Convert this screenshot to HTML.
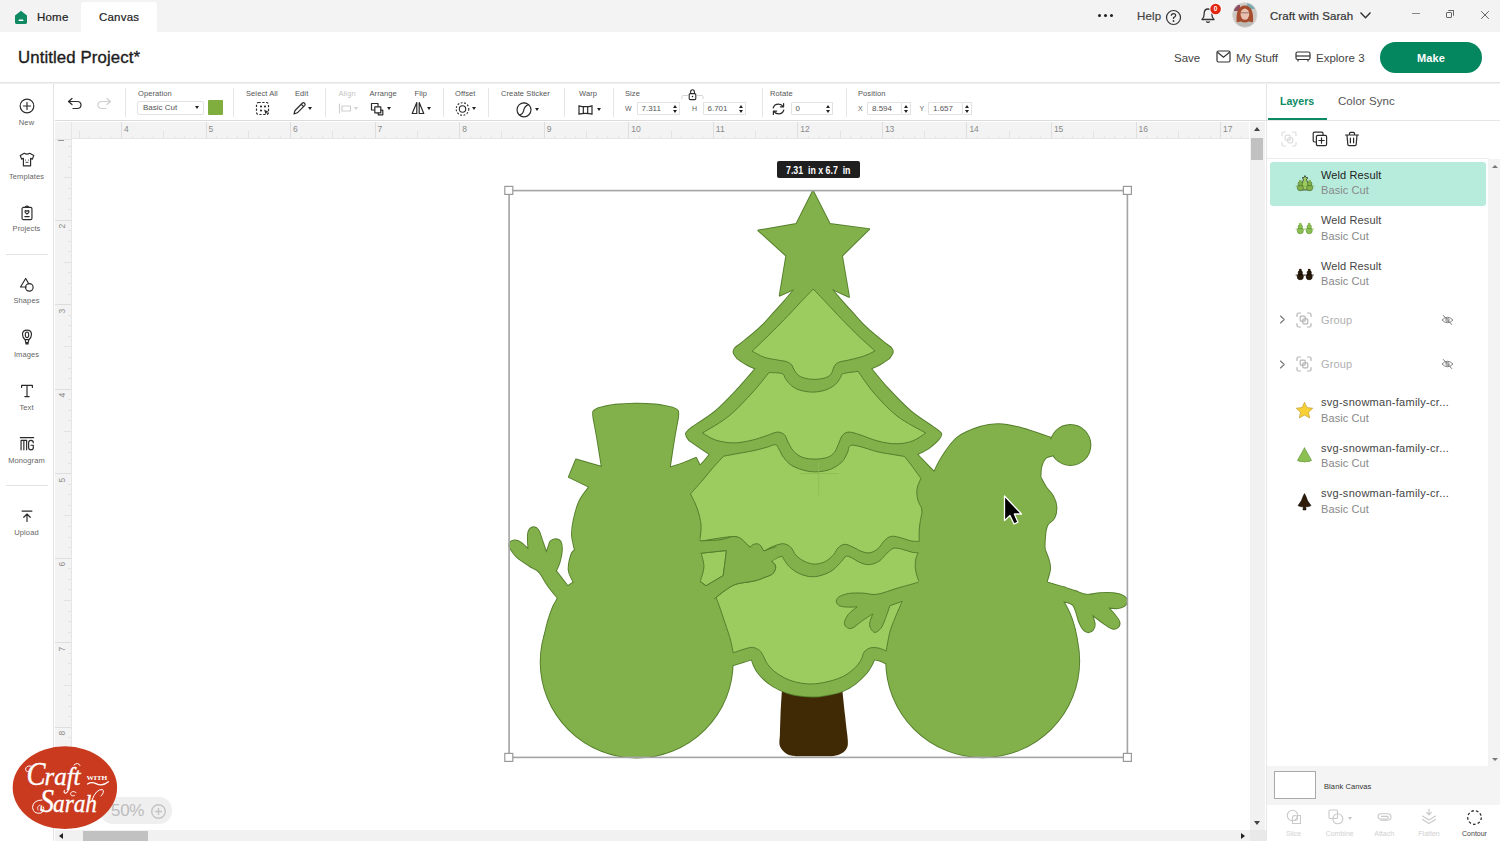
<!DOCTYPE html>
<html>
<head>
<meta charset="utf-8">
<title>Canvas</title>
<style>
*{box-sizing:border-box;margin:0;padding:0}
html,body{width:1500px;height:841px;overflow:hidden;background:#fff;font-family:"Liberation Sans",sans-serif;color:#333}
.abs{position:absolute}
#titlebar{position:absolute;left:0;top:0;width:1500px;height:32px;background:#f3f3f3}
#tab-canvas{position:absolute;left:81px;top:2px;width:76px;height:30px;background:#fff;border-radius:3px 3px 0 0}
.tb-txt{position:absolute;font-size:11.5px;color:#222;white-space:nowrap;letter-spacing:.2px;-webkit-text-stroke:.2px currentColor}
#header{position:absolute;left:0;top:32px;width:1500px;height:51px;background:#fff;border-bottom:1px solid #e4e4e4}
#header:after{content:"";position:absolute;left:0;right:0;bottom:-3px;height:2px;background:#f1f1f1}
#projtitle{position:absolute;left:18px;top:15.5px;font-size:16.8px;color:#1c1c1c;-webkit-text-stroke:.35px #1c1c1c;letter-spacing:.1px;white-space:nowrap}
.hd-txt{position:absolute;font-size:11.5px;color:#444;white-space:nowrap}
#make{position:absolute;left:1380px;top:10px;width:102px;height:31px;border-radius:16px;background:#04865f;color:#fff;font-weight:bold;font-size:11px;text-align:center;line-height:33.5px;letter-spacing:.1px}
#sidebar{position:absolute;left:0;top:84px;width:54px;height:757px;background:#fff;border-right:1px solid #e3e3e3}
.sb-lbl{position:absolute;left:0;width:53px;text-align:center;font-size:7.5px;color:#666;letter-spacing:.1px}
.sb-sep{position:absolute;left:6px;width:42px;height:1px;background:#e2e2e2}
#toolbar{position:absolute;left:55px;top:84px;width:1211px;height:37px;background:#fff;border-bottom:1px solid #dcdcdc}
.tl{position:absolute;top:5px;font-size:7.5px;color:#555;white-space:nowrap;letter-spacing:.1px}
.tl.dis{color:#c4c4c4}
.tsep{position:absolute;top:4px;width:1px;height:29px;background:#e6e6e6}
.inp{position:absolute;top:16px;height:15px;border:1px solid #e2e2e2;background:#fff;font-size:8px;color:#555;line-height:13px;padding-left:4px;border-radius:1px}
.spin{position:absolute;top:16px;width:9px;height:15px;border:1px solid #e2e2e2;border-left:none;background:#fff}
.spin:before{content:"";position:absolute;left:2px;top:2.5px;border:2.5px solid transparent;border-top:none;border-bottom:3.5px solid #222}
.spin:after{content:"";position:absolute;left:2px;top:7.5px;border:2.5px solid transparent;border-bottom:none;border-top:3.5px solid #222}
.pre{position:absolute;top:19px;font-size:7px;color:#666}
.car{position:absolute;width:0;height:0;border:2.5px solid transparent;border-bottom:none;border-top:3.5px solid #222}
#hruler{position:absolute;left:55px;top:122px;width:1194px;height:17px;background:#f3f3f3;border-bottom:1px solid #e6e6e6;overflow:hidden}
#vruler{position:absolute;left:55px;top:122px;width:17px;height:707px;background:#f3f3f3;border-right:1px solid #e6e6e6;overflow:hidden}
.rn{position:absolute;font-size:8.5px;color:#8a8a8a}
#vscroll{position:absolute;left:1250px;top:122px;width:15px;height:708px;background:#f1f1f1}
#hscroll{position:absolute;left:55px;top:830px;width:1195px;height:11px;background:#f1f1f1}
#panel{position:absolute;left:1266px;top:84px;width:234px;height:757px;background:#fff;border-left:1px solid #e6e6e6}
.ln{position:absolute;left:54px;font-size:11px;color:#444;white-space:nowrap;letter-spacing:.12px}
.ls{position:absolute;left:54px;font-size:11px;color:#888;white-space:nowrap;letter-spacing:.1px}
.bl{position:absolute;top:746px;font-size:7px;color:#c9c9c9;text-align:center;width:50px}
</style>
</head>
<body>
<!-- TITLEBAR -->
<div id="titlebar">
  <div id="tab-canvas"></div>
  <svg class="abs" style="left:14px;top:10px" width="14" height="15" viewBox="0 0 14 15"><path d="M7 .8 L13 5.4 V12.6 Q13 14 11.6 14 H2.4 Q1 14 1 12.6 V5.4 Z" fill="#0f8a63"/><rect x="4.6" y="9.6" width="4.8" height="1.5" rx=".6" fill="#fff"/></svg>
  <div class="tb-txt" style="left:37px;top:11px">Home</div>
  <div class="tb-txt" style="left:99px;top:11px">Canvas</div>
  <div class="abs" style="left:1098px;top:14px;width:3px;height:3px;border-radius:50%;background:#222;box-shadow:6px 0 0 #222,12px 0 0 #222"></div>
  <div class="tb-txt" style="left:1137px;top:10px;color:#444">Help</div>
  <svg class="abs" style="left:1165px;top:8.5px" width="17" height="17" viewBox="0 0 17 17"><circle cx="8.5" cy="8.5" r="7" fill="none" stroke="#333" stroke-width="1.2"/><path d="M6.3 6.7 Q6.3 4.6 8.5 4.6 Q10.7 4.6 10.7 6.5 Q10.7 7.8 8.5 8.6 V10" fill="none" stroke="#333" stroke-width="1.2"/><circle cx="8.5" cy="12" r=".9" fill="#333"/></svg>
  <svg class="abs" style="left:1198px;top:3px" width="26" height="24" viewBox="0 0 26 24"><path d="M4 16.5 Q6.2 14.5 6.2 10.5 Q6.2 6 10 6 Q13.8 6 13.8 10.5 Q13.8 14.5 16 16.5 Z" fill="none" stroke="#333" stroke-width="1.3" stroke-linejoin="round"/><path d="M8.3 18.5 Q10 20.2 11.7 18.5" fill="none" stroke="#333" stroke-width="1.3"/><circle cx="17.6" cy="6" r="6.2" fill="#fff"/><circle cx="17.6" cy="6" r="5.3" fill="#e2260f"/><text x="17.6" y="8.4" font-size="6.5" font-weight="bold" fill="#fff" text-anchor="middle" font-family="Liberation Sans">0</text></svg>
  <svg class="abs" style="left:1232px;top:2px" width="26" height="27" viewBox="0 0 26 27"><defs><clipPath id="avc"><circle cx="12.8" cy="13" r="12.4"/></clipPath><filter id="avb"><feGaussianBlur stdDeviation=".55"/></filter></defs><g clip-path="url(#avc)"><g filter="url(#avb)"><rect width="26" height="27" fill="#cdc8c4"/><rect x="15" y="0" width="8" height="7" fill="#7fa9ad"/><rect x="2" y="3" width="6" height="6" fill="#8a5064"/><path d="M4.6 20 Q3.6 4 12.8 3.6 Q22 4 21 20 Q17 22 12.8 22 Q8.6 22 4.6 20 Z" fill="#a54b2d"/><ellipse cx="12.9" cy="12.2" rx="4.3" ry="5.6" fill="#e9c0af"/><path d="M9.2 10.8 H16.6" stroke="#6b4a42" stroke-width=".7"/><path d="M1 27 Q3 19.6 9 19.4 Q12.8 21.6 16.6 19.4 Q23 19.6 25 27 Z" fill="#bdb9b4"/></g><circle cx="12.8" cy="13" r="12.4" fill="none" stroke="#ddd" stroke-width=".8"/></g></svg>
  <div class="tb-txt" style="left:1270px;top:10px;color:#333;letter-spacing:.05px">Craft with Sarah</div>
  <svg class="abs" style="left:1359px;top:11px" width="13" height="9" viewBox="0 0 13 9"><path d="M1.5 1.5 L6.5 6.8 L11.5 1.5" fill="none" stroke="#333" stroke-width="1.4"/></svg>
  <div class="abs" style="left:1412px;top:13px;width:8px;height:1px;background:#888"></div>
  <div class="abs" style="left:1446px;top:12px;width:6px;height:6px;border:1px solid #666;border-radius:1px"></div>
  <div class="abs" style="left:1448px;top:10px;width:6px;height:6px;border-top:1px solid #666;border-right:1px solid #666;border-radius:1px"></div>
  <svg class="abs" style="left:1480px;top:10px" width="10" height="10" viewBox="0 0 10 10"><path d="M1.2 1.2 L8.8 8.8 M8.8 1.2 L1.2 8.8" stroke="#666" stroke-width="1"/></svg>
</div>

<!-- HEADER -->
<div id="header">
  <div id="projtitle">Untitled Project*</div>
  <div class="hd-txt" style="left:1174px;top:20px">Save</div>
  <svg class="abs" style="left:1216px;top:18px" width="15" height="13" viewBox="0 0 15 13"><rect x="1" y="1" width="13" height="11" rx="1.5" fill="none" stroke="#333" stroke-width="1.2"/><path d="M1.5 2.2 L7.5 7.2 L13.5 2.2" fill="none" stroke="#333" stroke-width="1.2"/></svg>
  <div class="hd-txt" style="left:1236px;top:20px">My Stuff</div>
  <svg class="abs" style="left:1295px;top:19px" width="16" height="11" viewBox="0 0 16 11"><rect x="1" y="1" width="14" height="7.5" rx="1.5" fill="none" stroke="#333" stroke-width="1.2"/><path d="M1 5 H15" stroke="#333" stroke-width="1.2"/><path d="M3 8.5 V10.5 M13 8.5 V10.5" stroke="#333" stroke-width="1.2"/></svg>
  <div class="hd-txt" style="left:1316px;top:20px">Explore 3</div>
  <div id="make">Make</div>
</div>

<!-- SIDEBAR -->
<div id="sidebar">
<!--SIDEBAR-ICONS-->
<svg class="abs" style="left:17.5px;top:13.3px" width="18" height="18" viewBox="0 0 20 20"><circle cx="10" cy="10" r="7.6" fill="none" stroke="#2b2b2b" stroke-width="1.3" stroke-linecap="round" stroke-linejoin="round"/><path d="M10 6 V14 M6 10 H14" fill="none" stroke="#2b2b2b" stroke-width="1.3" stroke-linecap="round" stroke-linejoin="round"/></svg>
<div class="sb-lbl" style="top:33.5px">New</div>
<svg class="abs" style="left:17.5px;top:66.7px" width="18" height="18" viewBox="0 0 20 20"><path d="M7 2.5 Q10 4.6 13 2.5 L17.5 5 L16 9 L14 8.2 V16.5 H6 V8.2 L4 9 L2.5 5 Z" fill="none" stroke="#2b2b2b" stroke-width="1.3" stroke-linecap="round" stroke-linejoin="round"/><circle cx="8.4" cy="10" r=".6" fill="#2b2b2b"/><circle cx="11.6" cy="10" r=".6" fill="#2b2b2b"/><path d="M8.4 12.6 H11.6" stroke="#2b2b2b" stroke-width="1"/></svg>
<div class="sb-lbl" style="top:87.5px">Templates</div>
<svg class="abs" style="left:17.5px;top:120.0px" width="18" height="18" viewBox="0 0 20 20"><rect x="4.5" y="3.8" width="11" height="13.5" rx="1.6" fill="none" stroke="#2b2b2b" stroke-width="1.3" stroke-linecap="round" stroke-linejoin="round"/><path d="M8 3.6 Q10 1.2 12 3.6" fill="none" stroke="#2b2b2b" stroke-width="1.3" stroke-linecap="round" stroke-linejoin="round"/><path d="M10 11.2 Q7.6 9.6 7.8 8.2 Q8.2 6.8 10 8 Q11.8 6.8 12.2 8.2 Q12.4 9.6 10 11.2 Z" fill="none" stroke="#2b2b2b" stroke-width="1.3" stroke-linecap="round" stroke-linejoin="round"/><path d="M7.6 14 H12.4" fill="none" stroke="#2b2b2b" stroke-width="1.3" stroke-linecap="round" stroke-linejoin="round"/></svg>
<div class="sb-lbl" style="top:139.8px">Projects</div>
<div class="sb-sep" style="top:170.0px"></div>
<svg class="abs" style="left:17.5px;top:192.2px" width="18" height="18" viewBox="0 0 20 20"><path d="M8.5 2.8 L2.8 12.2 H9.2" fill="none" stroke="#2b2b2b" stroke-width="1.3" stroke-linecap="round" stroke-linejoin="round"/><path d="M8.5 2.8 L12 8.6" fill="none" stroke="#2b2b2b" stroke-width="1.3" stroke-linecap="round" stroke-linejoin="round"/><circle cx="12.6" cy="12.6" r="4.2" fill="none" stroke="#2b2b2b" stroke-width="1.3" stroke-linecap="round" stroke-linejoin="round"/></svg>
<div class="sb-lbl" style="top:212.2px">Shapes</div>
<svg class="abs" style="left:17.5px;top:244.3px" width="18" height="18" viewBox="0 0 20 20"><path d="M10 2.4 Q5 2.4 5 7.2 Q5 10.6 8 13 H12 Q15 10.6 15 7.2 Q15 2.4 10 2.4 Z" fill="none" stroke="#2b2b2b" stroke-width="1.3" stroke-linecap="round" stroke-linejoin="round"/><ellipse cx="10" cy="7.6" rx="1.9" ry="3.2" fill="none" stroke="#2b2b2b" stroke-width="1.3" stroke-linecap="round" stroke-linejoin="round"/><path d="M8 13 L8.6 16.2 H11.4 L12 13 M8.6 17.6 H11.4" fill="none" stroke="#2b2b2b" stroke-width="1.3" stroke-linecap="round" stroke-linejoin="round"/></svg>
<div class="sb-lbl" style="top:265.5px">Images</div>
<svg class="abs" style="left:17.5px;top:297.6px" width="18" height="18" viewBox="0 0 20 20"><path d="M4 6 V3.8 H16 V6 M10 3.8 V16 M7.6 16.2 H12.4" fill="none" stroke="#2b2b2b" stroke-width="1.3" stroke-linecap="round" stroke-linejoin="round"/></svg>
<div class="sb-lbl" style="top:318.8px">Text</div>
<svg class="abs" style="left:17.5px;top:351.0px" width="18" height="18" viewBox="0 0 20 20"><path d="M2.6 3 H17.4 M3.4 16.5 V6 H9.6 V16.5 M6.5 6 V16.5" fill="none" stroke="#2b2b2b" stroke-width="1.3" stroke-linecap="round" stroke-linejoin="round"/><path d="M17 8.5 Q17 6 14.4 6 Q11.8 6 11.8 8.6 V14 Q11.8 16.5 14.4 16.5 Q17 16.5 17 14 V11.4 H14.4" fill="none" stroke="#2b2b2b" stroke-width="1.3" stroke-linecap="round" stroke-linejoin="round"/></svg>
<div class="sb-lbl" style="top:372.2px">Monogram</div>
<div class="sb-sep" style="top:401.0px"></div>
<svg class="abs" style="left:17.5px;top:422.5px" width="18" height="18" viewBox="0 0 20 20"><path d="M4.5 4.5 H15.5 M10 16 V8 M6.4 11.4 L10 7.8 L13.6 11.4" fill="none" stroke="#2b2b2b" stroke-width="1.3" stroke-linecap="round" stroke-linejoin="round"/></svg>
<div class="sb-lbl" style="top:444.0px">Upload</div>
<!--/SIDEBAR-ICONS-->
</div>

<!-- TOOLBAR -->
<div id="toolbar">
<!--TOOLBAR-ITEMS-->
<svg class="abs" style="left:12.0px;top:13.0px" width="16" height="13" viewBox="0 0 16 13"><path d="M5 1.5 L1.5 4.5 L5 7.5 M1.8 4.5 H10 Q14 4.5 14 8 Q14 11.5 10 11.5 H6" fill="none" stroke="#2b2b2b" stroke-width="1.2" stroke-linecap="round" stroke-linejoin="round"/></svg>
<svg class="abs" style="left:41.0px;top:13.0px" width="16" height="13" viewBox="0 0 16 13"><path d="M11 1.5 L14.5 4.5 L11 7.5 M14.2 4.5 H6 Q2 4.5 2 8 Q2 11.5 6 11.5 H10" fill="none" stroke="#cfcfcf" stroke-width="1.2" stroke-linecap="round" stroke-linejoin="round"/></svg>
<div class="tsep" style="left:70.0px"></div>
<div class="tl" style="left:83.0px;top:5.0px">Operation</div>
<div class="inp" style="left:82px;top:17px;width:67px;height:14px;line-height:12px;padding-left:5px;border-radius:2px">Basic Cut</div>
<div class="car" style="left:140.0px;top:22.0px;border-top-color:#222"></div>
<div class="abs" style="left:153px;top:16px;width:15px;height:15px;background:#7fae3f;border-radius:1px"></div>
<div class="tsep" style="left:178.0px"></div>
<div class="tl" style="left:191.0px;top:5.0px">Select All</div>
<svg class="abs" style="left:200.0px;top:17.0px" width="16" height="16" viewBox="0 0 16 16"><rect x="1.5" y="1.5" width="12" height="12" rx="2" fill="none" stroke="#2b2b2b" stroke-width="1.2" stroke-dasharray="2.2 1.6"/><circle cx="6" cy="5.5" r="1.1" fill="#2b2b2b"/><circle cx="10" cy="5.5" r="1.1" fill="#2b2b2b"/><circle cx="6" cy="9.5" r="1.1" fill="#2b2b2b"/><path d="M9 8.5 L14 11 L11.5 11.8 L10.8 14 Z" fill="#2b2b2b"/></svg>
<div class="tl" style="left:240.0px;top:5.0px">Edit</div>
<svg class="abs" style="left:237.0px;top:17.0px" width="15" height="15" viewBox="0 0 15 15"><path d="M2 13 L3 9.5 L10.5 2 Q11.5 1.2 12.6 2.2 Q13.6 3.3 12.8 4.3 L5.3 11.8 Z M9.3 3.3 L11.6 5.6" fill="none" stroke="#2b2b2b" stroke-width="1.2" stroke-linecap="round" stroke-linejoin="round"/></svg>
<div class="car" style="left:253.0px;top:22.5px;border-top-color:#222"></div>
<div class="tsep" style="left:270.0px"></div>
<div class="tl dis" style="left:283.5px;top:5.0px">Align</div>
<svg class="abs" style="left:283.0px;top:19.0px" width="14" height="11" viewBox="0 0 14 11"><path d="M1.5 1 V10" fill="none" stroke="#cfcfcf" stroke-width="1.2" stroke-linecap="round" stroke-linejoin="round"/><rect x="4" y="3" width="8.5" height="5" fill="none" stroke="#cfcfcf" stroke-width="1.2" stroke-linecap="round" stroke-linejoin="round"/></svg>
<div class="car" style="left:298.5px;top:22.5px;border-top-color:#cfcfcf"></div>
<div class="tl" style="left:314.5px;top:5.0px">Arrange</div>
<svg class="abs" style="left:315.0px;top:17.5px" width="14" height="14" viewBox="0 0 14 14"><path d="M8 4.5 V1.5 H1.5 V8 H4.5" fill="none" stroke="#2b2b2b" stroke-width="1.2" stroke-linecap="round" stroke-linejoin="round"/><rect x="4.8" y="4.8" width="6" height="6" fill="none" stroke="#2b2b2b" stroke-width="1.2" stroke-linecap="round" stroke-linejoin="round"/><path d="M8.2 11 V12.8 H12.8 V8.2 H11" fill="none" stroke="#2b2b2b" stroke-width="1.2" stroke-linecap="round" stroke-linejoin="round"/></svg>
<div class="car" style="left:331.5px;top:22.5px;border-top-color:#222"></div>
<div class="tl" style="left:359.5px;top:5.0px">Flip</div>
<svg class="abs" style="left:356.0px;top:17.0px" width="14" height="14" viewBox="0 0 14 14"><path d="M5.8 1.5 L1.2 12.5 H5.8 Z" fill="none" stroke="#2b2b2b" stroke-width="1.2" stroke-linecap="round" stroke-linejoin="round"/><path d="M8.2 1.5 L12.8 12.5 H8.2 Z" fill="none" stroke="#2b2b2b" stroke-width="1.2" stroke-linecap="round" stroke-linejoin="round"/></svg>
<div class="car" style="left:371.5px;top:22.5px;border-top-color:#222"></div>
<div class="tsep" style="left:388.0px"></div>
<div class="tl" style="left:400.0px;top:5.0px">Offset</div>
<svg class="abs" style="left:400.0px;top:17.0px" width="16" height="16" viewBox="0 0 16 16"><circle cx="7.5" cy="8" r="6.3" fill="none" stroke="#2b2b2b" stroke-width="1.1" stroke-dasharray="1.8 1.6"/><circle cx="7.5" cy="8" r="3.2" fill="none" stroke="#2b2b2b" stroke-width="1.1"/></svg>
<div class="car" style="left:417.0px;top:22.5px;border-top-color:#222"></div>
<div class="tsep" style="left:433.0px"></div>
<div class="tl" style="left:446.0px;top:5.0px">Create Sticker</div>
<svg class="abs" style="left:459.5px;top:17.0px" width="18" height="18" viewBox="0 0 18 18"><path d="M9 1.8 A7 7 0 1 0 16 8.8 Q16 5.6 13.6 3.6 Q9.5 5 8.6 9.6 Q7.9 13.2 4.2 14.2" fill="none" stroke="#2b2b2b" stroke-width="1.2" stroke-linecap="round" stroke-linejoin="round"/><path d="M13.6 3.6 Q11.6 1.8 9 1.8" fill="none" stroke="#2b2b2b" stroke-width="1.2" stroke-linecap="round" stroke-linejoin="round"/></svg>
<div class="car" style="left:479.5px;top:24.0px;border-top-color:#222"></div>
<div class="tsep" style="left:509.0px"></div>
<div class="tl" style="left:524.0px;top:5.0px">Warp</div>
<svg class="abs" style="left:522.0px;top:20.0px" width="17" height="12" viewBox="0 0 17 12"><path d="M1.8 1.8 Q8.5 3.6 15.2 1.8 M1.8 10.2 Q8.5 8.4 15.2 10.2 M2 1.8 V10.2 M6.3 2.6 V9.4 M10.7 2.6 V9.4 M15 1.8 V10.2" fill="none" stroke="#2b2b2b" stroke-width="1.2" stroke-linecap="round" stroke-linejoin="round"/></svg>
<div class="car" style="left:541.5px;top:24.0px;border-top-color:#222"></div>
<div class="tsep" style="left:558.0px"></div>
<div class="tl" style="left:570.0px;top:5.0px">Size</div>
<div class="pre" style="left:570.0px;top:20.5px">W</div>
<div class="inp" style="left:581.5px;top:17.5px;width:35.0px;height:13px;line-height:11px">7.311</div>
<div class="spin" style="left:616.0px;top:17.5px;height:13px"></div>
<svg class="abs" style="left:626.0px;top:4.0px" width="23" height="13" viewBox="0 0 23 13"><path d="M1 11 V8.5 Q1 7.5 2 7.5 H7 M22 11 V8.5 Q22 7.5 21 7.5 H16" fill="none" stroke="#d6d6d6" stroke-width="1"/><rect x="8.2" y="5.6" width="6.6" height="6" rx="1" fill="#fff" stroke="#2b2b2b" stroke-width="1.1"/><path d="M9.6 5.6 V4 Q9.6 1.8 11.5 1.8 Q13.4 1.8 13.4 4 V5.6" fill="none" stroke="#2b2b2b" stroke-width="1.1"/><circle cx="11.5" cy="8.6" r=".8" fill="#2b2b2b"/></svg>
<div class="pre" style="left:637.0px;top:20.5px">H</div>
<div class="inp" style="left:647.5px;top:17.5px;width:35.0px;height:13px;line-height:11px">6.701</div>
<div class="spin" style="left:682.0px;top:17.5px;height:13px"></div>
<div class="tsep" style="left:707.0px"></div>
<div class="tl" style="left:715.0px;top:5.0px">Rotate</div>
<svg class="abs" style="left:715.5px;top:17.5px" width="15" height="14" viewBox="0 0 15 14"><path d="M2.2 6 Q3.2 2.2 7.5 2.2 Q10.6 2.2 12.2 4.6 M12.6 1.6 V4.8 H9.4 M12.8 8 Q11.8 11.8 7.5 11.8 Q4.4 11.8 2.8 9.4 M2.4 12.4 V9.2 H5.6" fill="none" stroke="#2b2b2b" stroke-width="1.2" stroke-linecap="round" stroke-linejoin="round"/></svg>
<div class="inp" style="left:735.5px;top:17.5px;width:34.0px;height:13px;line-height:11px">0</div>
<div class="spin" style="left:769.0px;top:17.5px;height:13px"></div>
<div class="tsep" style="left:790.5px"></div>
<div class="tl" style="left:803.0px;top:5.0px">Position</div>
<div class="pre" style="left:803.0px;top:20.5px">X</div>
<div class="inp" style="left:812.0px;top:17.5px;width:35.0px;height:13px;line-height:11px">8.594</div>
<div class="spin" style="left:846.5px;top:17.5px;height:13px"></div>
<div class="pre" style="left:864.5px;top:20.5px">Y</div>
<div class="inp" style="left:873.0px;top:17.5px;width:35.0px;height:13px;line-height:11px">1.657</div>
<div class="spin" style="left:907.5px;top:17.5px;height:13px"></div>
<!--/TOOLBAR-ITEMS-->
</div>

<!-- RULERS / CANVAS -->
<div id="hruler"><!--HRULER--><div class="abs" style="left:23.7px;top:9px;width:1px;height:9px;background:#e2e2e2"></div><div class="abs" style="left:34.3px;top:14px;width:1px;height:4px;background:#e4e4e4"></div><div class="abs" style="left:44.9px;top:14px;width:1px;height:4px;background:#e4e4e4"></div><div class="abs" style="left:55.4px;top:14px;width:1px;height:4px;background:#e4e4e4"></div><div class="abs" style="left:66.0px;top:0;width:1px;height:18px;background:#dedede"></div><div class="abs" style="left:76.6px;top:14px;width:1px;height:4px;background:#e4e4e4"></div><div class="abs" style="left:87.1px;top:14px;width:1px;height:4px;background:#e4e4e4"></div><div class="abs" style="left:97.7px;top:14px;width:1px;height:4px;background:#e4e4e4"></div><div class="abs" style="left:108.3px;top:9px;width:1px;height:9px;background:#e2e2e2"></div><div class="abs" style="left:118.8px;top:14px;width:1px;height:4px;background:#e4e4e4"></div><div class="abs" style="left:129.4px;top:14px;width:1px;height:4px;background:#e4e4e4"></div><div class="abs" style="left:140.0px;top:14px;width:1px;height:4px;background:#e4e4e4"></div><div class="rn" style="left:69.0px;top:2px">4</div><div class="abs" style="left:150.5px;top:0;width:1px;height:18px;background:#dedede"></div><div class="abs" style="left:161.1px;top:14px;width:1px;height:4px;background:#e4e4e4"></div><div class="abs" style="left:171.7px;top:14px;width:1px;height:4px;background:#e4e4e4"></div><div class="abs" style="left:182.2px;top:14px;width:1px;height:4px;background:#e4e4e4"></div><div class="abs" style="left:192.8px;top:9px;width:1px;height:9px;background:#e2e2e2"></div><div class="abs" style="left:203.4px;top:14px;width:1px;height:4px;background:#e4e4e4"></div><div class="abs" style="left:213.9px;top:14px;width:1px;height:4px;background:#e4e4e4"></div><div class="abs" style="left:224.5px;top:14px;width:1px;height:4px;background:#e4e4e4"></div><div class="rn" style="left:153.5px;top:2px">5</div><div class="abs" style="left:235.1px;top:0;width:1px;height:18px;background:#dedede"></div><div class="abs" style="left:245.6px;top:14px;width:1px;height:4px;background:#e4e4e4"></div><div class="abs" style="left:256.2px;top:14px;width:1px;height:4px;background:#e4e4e4"></div><div class="abs" style="left:266.8px;top:14px;width:1px;height:4px;background:#e4e4e4"></div><div class="abs" style="left:277.4px;top:9px;width:1px;height:9px;background:#e2e2e2"></div><div class="abs" style="left:287.9px;top:14px;width:1px;height:4px;background:#e4e4e4"></div><div class="abs" style="left:298.5px;top:14px;width:1px;height:4px;background:#e4e4e4"></div><div class="abs" style="left:309.1px;top:14px;width:1px;height:4px;background:#e4e4e4"></div><div class="rn" style="left:238.1px;top:2px">6</div><div class="abs" style="left:319.6px;top:0;width:1px;height:18px;background:#dedede"></div><div class="abs" style="left:330.2px;top:14px;width:1px;height:4px;background:#e4e4e4"></div><div class="abs" style="left:340.8px;top:14px;width:1px;height:4px;background:#e4e4e4"></div><div class="abs" style="left:351.3px;top:14px;width:1px;height:4px;background:#e4e4e4"></div><div class="abs" style="left:361.9px;top:9px;width:1px;height:9px;background:#e2e2e2"></div><div class="abs" style="left:372.5px;top:14px;width:1px;height:4px;background:#e4e4e4"></div><div class="abs" style="left:383.0px;top:14px;width:1px;height:4px;background:#e4e4e4"></div><div class="abs" style="left:393.6px;top:14px;width:1px;height:4px;background:#e4e4e4"></div><div class="rn" style="left:322.6px;top:2px">7</div><div class="abs" style="left:404.2px;top:0;width:1px;height:18px;background:#dedede"></div><div class="abs" style="left:414.7px;top:14px;width:1px;height:4px;background:#e4e4e4"></div><div class="abs" style="left:425.3px;top:14px;width:1px;height:4px;background:#e4e4e4"></div><div class="abs" style="left:435.9px;top:14px;width:1px;height:4px;background:#e4e4e4"></div><div class="abs" style="left:446.4px;top:9px;width:1px;height:9px;background:#e2e2e2"></div><div class="abs" style="left:457.0px;top:14px;width:1px;height:4px;background:#e4e4e4"></div><div class="abs" style="left:467.6px;top:14px;width:1px;height:4px;background:#e4e4e4"></div><div class="abs" style="left:478.1px;top:14px;width:1px;height:4px;background:#e4e4e4"></div><div class="rn" style="left:407.2px;top:2px">8</div><div class="abs" style="left:488.7px;top:0;width:1px;height:18px;background:#dedede"></div><div class="abs" style="left:499.3px;top:14px;width:1px;height:4px;background:#e4e4e4"></div><div class="abs" style="left:509.8px;top:14px;width:1px;height:4px;background:#e4e4e4"></div><div class="abs" style="left:520.4px;top:14px;width:1px;height:4px;background:#e4e4e4"></div><div class="abs" style="left:531.0px;top:9px;width:1px;height:9px;background:#e2e2e2"></div><div class="abs" style="left:541.5px;top:14px;width:1px;height:4px;background:#e4e4e4"></div><div class="abs" style="left:552.1px;top:14px;width:1px;height:4px;background:#e4e4e4"></div><div class="abs" style="left:562.7px;top:14px;width:1px;height:4px;background:#e4e4e4"></div><div class="rn" style="left:491.7px;top:2px">9</div><div class="abs" style="left:573.2px;top:0;width:1px;height:18px;background:#dedede"></div><div class="abs" style="left:583.8px;top:14px;width:1px;height:4px;background:#e4e4e4"></div><div class="abs" style="left:594.4px;top:14px;width:1px;height:4px;background:#e4e4e4"></div><div class="abs" style="left:604.9px;top:14px;width:1px;height:4px;background:#e4e4e4"></div><div class="abs" style="left:615.5px;top:9px;width:1px;height:9px;background:#e2e2e2"></div><div class="abs" style="left:626.1px;top:14px;width:1px;height:4px;background:#e4e4e4"></div><div class="abs" style="left:636.6px;top:14px;width:1px;height:4px;background:#e4e4e4"></div><div class="abs" style="left:647.2px;top:14px;width:1px;height:4px;background:#e4e4e4"></div><div class="rn" style="left:576.2px;top:2px">10</div><div class="abs" style="left:657.8px;top:0;width:1px;height:18px;background:#dedede"></div><div class="abs" style="left:668.3px;top:14px;width:1px;height:4px;background:#e4e4e4"></div><div class="abs" style="left:678.9px;top:14px;width:1px;height:4px;background:#e4e4e4"></div><div class="abs" style="left:689.5px;top:14px;width:1px;height:4px;background:#e4e4e4"></div><div class="abs" style="left:700.1px;top:9px;width:1px;height:9px;background:#e2e2e2"></div><div class="abs" style="left:710.6px;top:14px;width:1px;height:4px;background:#e4e4e4"></div><div class="abs" style="left:721.2px;top:14px;width:1px;height:4px;background:#e4e4e4"></div><div class="abs" style="left:731.8px;top:14px;width:1px;height:4px;background:#e4e4e4"></div><div class="rn" style="left:660.8px;top:2px">11</div><div class="abs" style="left:742.3px;top:0;width:1px;height:18px;background:#dedede"></div><div class="abs" style="left:752.9px;top:14px;width:1px;height:4px;background:#e4e4e4"></div><div class="abs" style="left:763.5px;top:14px;width:1px;height:4px;background:#e4e4e4"></div><div class="abs" style="left:774.0px;top:14px;width:1px;height:4px;background:#e4e4e4"></div><div class="abs" style="left:784.6px;top:9px;width:1px;height:9px;background:#e2e2e2"></div><div class="abs" style="left:795.2px;top:14px;width:1px;height:4px;background:#e4e4e4"></div><div class="abs" style="left:805.7px;top:14px;width:1px;height:4px;background:#e4e4e4"></div><div class="abs" style="left:816.3px;top:14px;width:1px;height:4px;background:#e4e4e4"></div><div class="rn" style="left:745.3px;top:2px">12</div><div class="abs" style="left:826.9px;top:0;width:1px;height:18px;background:#dedede"></div><div class="abs" style="left:837.4px;top:14px;width:1px;height:4px;background:#e4e4e4"></div><div class="abs" style="left:848.0px;top:14px;width:1px;height:4px;background:#e4e4e4"></div><div class="abs" style="left:858.6px;top:14px;width:1px;height:4px;background:#e4e4e4"></div><div class="abs" style="left:869.1px;top:9px;width:1px;height:9px;background:#e2e2e2"></div><div class="abs" style="left:879.7px;top:14px;width:1px;height:4px;background:#e4e4e4"></div><div class="abs" style="left:890.3px;top:14px;width:1px;height:4px;background:#e4e4e4"></div><div class="abs" style="left:900.8px;top:14px;width:1px;height:4px;background:#e4e4e4"></div><div class="rn" style="left:829.9px;top:2px">13</div><div class="abs" style="left:911.4px;top:0;width:1px;height:18px;background:#dedede"></div><div class="abs" style="left:922.0px;top:14px;width:1px;height:4px;background:#e4e4e4"></div><div class="abs" style="left:932.5px;top:14px;width:1px;height:4px;background:#e4e4e4"></div><div class="abs" style="left:943.1px;top:14px;width:1px;height:4px;background:#e4e4e4"></div><div class="abs" style="left:953.7px;top:9px;width:1px;height:9px;background:#e2e2e2"></div><div class="abs" style="left:964.2px;top:14px;width:1px;height:4px;background:#e4e4e4"></div><div class="abs" style="left:974.8px;top:14px;width:1px;height:4px;background:#e4e4e4"></div><div class="abs" style="left:985.4px;top:14px;width:1px;height:4px;background:#e4e4e4"></div><div class="rn" style="left:914.4px;top:2px">14</div><div class="abs" style="left:995.9px;top:0;width:1px;height:18px;background:#dedede"></div><div class="abs" style="left:1006.5px;top:14px;width:1px;height:4px;background:#e4e4e4"></div><div class="abs" style="left:1017.1px;top:14px;width:1px;height:4px;background:#e4e4e4"></div><div class="abs" style="left:1027.6px;top:14px;width:1px;height:4px;background:#e4e4e4"></div><div class="abs" style="left:1038.2px;top:9px;width:1px;height:9px;background:#e2e2e2"></div><div class="abs" style="left:1048.8px;top:14px;width:1px;height:4px;background:#e4e4e4"></div><div class="abs" style="left:1059.3px;top:14px;width:1px;height:4px;background:#e4e4e4"></div><div class="abs" style="left:1069.9px;top:14px;width:1px;height:4px;background:#e4e4e4"></div><div class="rn" style="left:998.9px;top:2px">15</div><div class="abs" style="left:1080.5px;top:0;width:1px;height:18px;background:#dedede"></div><div class="abs" style="left:1091.0px;top:14px;width:1px;height:4px;background:#e4e4e4"></div><div class="abs" style="left:1101.6px;top:14px;width:1px;height:4px;background:#e4e4e4"></div><div class="abs" style="left:1112.2px;top:14px;width:1px;height:4px;background:#e4e4e4"></div><div class="abs" style="left:1122.8px;top:9px;width:1px;height:9px;background:#e2e2e2"></div><div class="abs" style="left:1133.3px;top:14px;width:1px;height:4px;background:#e4e4e4"></div><div class="abs" style="left:1143.9px;top:14px;width:1px;height:4px;background:#e4e4e4"></div><div class="abs" style="left:1154.5px;top:14px;width:1px;height:4px;background:#e4e4e4"></div><div class="rn" style="left:1083.5px;top:2px">16</div><div class="abs" style="left:1165.0px;top:0;width:1px;height:18px;background:#dedede"></div><div class="abs" style="left:1175.6px;top:14px;width:1px;height:4px;background:#e4e4e4"></div><div class="abs" style="left:1186.2px;top:14px;width:1px;height:4px;background:#e4e4e4"></div><div class="rn" style="left:1168.0px;top:2px">17</div><!--/HRULER--></div>
<div id="vruler"><!--VRULER--><div class="abs" style="top:23.6px;left:13px;height:1px;width:4px;background:#e4e4e4"></div><div class="abs" style="top:34.1px;left:13px;height:1px;width:4px;background:#e4e4e4"></div><div class="abs" style="top:44.7px;left:13px;height:1px;width:4px;background:#e4e4e4"></div><div class="abs" style="top:55.3px;left:9px;height:1px;width:8px;background:#e2e2e2"></div><div class="abs" style="top:65.8px;left:13px;height:1px;width:4px;background:#e4e4e4"></div><div class="abs" style="top:76.4px;left:13px;height:1px;width:4px;background:#e4e4e4"></div><div class="abs" style="top:87.0px;left:13px;height:1px;width:4px;background:#e4e4e4"></div><div class="abs" style="top:97.5px;left:0;height:1px;width:17px;background:#dedede"></div><div class="abs" style="top:108.1px;left:13px;height:1px;width:4px;background:#e4e4e4"></div><div class="abs" style="top:118.7px;left:13px;height:1px;width:4px;background:#e4e4e4"></div><div class="abs" style="top:129.2px;left:13px;height:1px;width:4px;background:#e4e4e4"></div><div class="abs" style="top:139.8px;left:9px;height:1px;width:8px;background:#e2e2e2"></div><div class="abs" style="top:150.4px;left:13px;height:1px;width:4px;background:#e4e4e4"></div><div class="abs" style="top:160.9px;left:13px;height:1px;width:4px;background:#e4e4e4"></div><div class="abs" style="top:171.5px;left:13px;height:1px;width:4px;background:#e4e4e4"></div><div class="rn" style="left:2px;top:99.0px;transform:rotate(-90deg);transform-origin:center;width:10px;height:10px;line-height:10px;text-align:center">2</div><div class="abs" style="top:182.1px;left:0;height:1px;width:17px;background:#dedede"></div><div class="abs" style="top:192.6px;left:13px;height:1px;width:4px;background:#e4e4e4"></div><div class="abs" style="top:203.2px;left:13px;height:1px;width:4px;background:#e4e4e4"></div><div class="abs" style="top:213.8px;left:13px;height:1px;width:4px;background:#e4e4e4"></div><div class="abs" style="top:224.4px;left:9px;height:1px;width:8px;background:#e2e2e2"></div><div class="abs" style="top:234.9px;left:13px;height:1px;width:4px;background:#e4e4e4"></div><div class="abs" style="top:245.5px;left:13px;height:1px;width:4px;background:#e4e4e4"></div><div class="abs" style="top:256.1px;left:13px;height:1px;width:4px;background:#e4e4e4"></div><div class="rn" style="left:2px;top:183.6px;transform:rotate(-90deg);transform-origin:center;width:10px;height:10px;line-height:10px;text-align:center">3</div><div class="abs" style="top:266.6px;left:0;height:1px;width:17px;background:#dedede"></div><div class="abs" style="top:277.2px;left:13px;height:1px;width:4px;background:#e4e4e4"></div><div class="abs" style="top:287.8px;left:13px;height:1px;width:4px;background:#e4e4e4"></div><div class="abs" style="top:298.3px;left:13px;height:1px;width:4px;background:#e4e4e4"></div><div class="abs" style="top:308.9px;left:9px;height:1px;width:8px;background:#e2e2e2"></div><div class="abs" style="top:319.5px;left:13px;height:1px;width:4px;background:#e4e4e4"></div><div class="abs" style="top:330.0px;left:13px;height:1px;width:4px;background:#e4e4e4"></div><div class="abs" style="top:340.6px;left:13px;height:1px;width:4px;background:#e4e4e4"></div><div class="rn" style="left:2px;top:268.1px;transform:rotate(-90deg);transform-origin:center;width:10px;height:10px;line-height:10px;text-align:center">4</div><div class="abs" style="top:351.2px;left:0;height:1px;width:17px;background:#dedede"></div><div class="abs" style="top:361.7px;left:13px;height:1px;width:4px;background:#e4e4e4"></div><div class="abs" style="top:372.3px;left:13px;height:1px;width:4px;background:#e4e4e4"></div><div class="abs" style="top:382.9px;left:13px;height:1px;width:4px;background:#e4e4e4"></div><div class="abs" style="top:393.4px;left:9px;height:1px;width:8px;background:#e2e2e2"></div><div class="abs" style="top:404.0px;left:13px;height:1px;width:4px;background:#e4e4e4"></div><div class="abs" style="top:414.6px;left:13px;height:1px;width:4px;background:#e4e4e4"></div><div class="abs" style="top:425.1px;left:13px;height:1px;width:4px;background:#e4e4e4"></div><div class="rn" style="left:2px;top:352.7px;transform:rotate(-90deg);transform-origin:center;width:10px;height:10px;line-height:10px;text-align:center">5</div><div class="abs" style="top:435.7px;left:0;height:1px;width:17px;background:#dedede"></div><div class="abs" style="top:446.3px;left:13px;height:1px;width:4px;background:#e4e4e4"></div><div class="abs" style="top:456.8px;left:13px;height:1px;width:4px;background:#e4e4e4"></div><div class="abs" style="top:467.4px;left:13px;height:1px;width:4px;background:#e4e4e4"></div><div class="abs" style="top:478.0px;left:9px;height:1px;width:8px;background:#e2e2e2"></div><div class="abs" style="top:488.5px;left:13px;height:1px;width:4px;background:#e4e4e4"></div><div class="abs" style="top:499.1px;left:13px;height:1px;width:4px;background:#e4e4e4"></div><div class="abs" style="top:509.7px;left:13px;height:1px;width:4px;background:#e4e4e4"></div><div class="rn" style="left:2px;top:437.2px;transform:rotate(-90deg);transform-origin:center;width:10px;height:10px;line-height:10px;text-align:center">6</div><div class="abs" style="top:520.2px;left:0;height:1px;width:17px;background:#dedede"></div><div class="abs" style="top:530.8px;left:13px;height:1px;width:4px;background:#e4e4e4"></div><div class="abs" style="top:541.4px;left:13px;height:1px;width:4px;background:#e4e4e4"></div><div class="abs" style="top:551.9px;left:13px;height:1px;width:4px;background:#e4e4e4"></div><div class="abs" style="top:562.5px;left:9px;height:1px;width:8px;background:#e2e2e2"></div><div class="abs" style="top:573.1px;left:13px;height:1px;width:4px;background:#e4e4e4"></div><div class="abs" style="top:583.6px;left:13px;height:1px;width:4px;background:#e4e4e4"></div><div class="abs" style="top:594.2px;left:13px;height:1px;width:4px;background:#e4e4e4"></div><div class="rn" style="left:2px;top:521.7px;transform:rotate(-90deg);transform-origin:center;width:10px;height:10px;line-height:10px;text-align:center">7</div><div class="abs" style="top:604.8px;left:0;height:1px;width:17px;background:#dedede"></div><div class="abs" style="top:615.3px;left:13px;height:1px;width:4px;background:#e4e4e4"></div><div class="abs" style="top:625.9px;left:13px;height:1px;width:4px;background:#e4e4e4"></div><div class="abs" style="top:636.5px;left:13px;height:1px;width:4px;background:#e4e4e4"></div><div class="abs" style="top:647.1px;left:9px;height:1px;width:8px;background:#e2e2e2"></div><div class="abs" style="top:657.6px;left:13px;height:1px;width:4px;background:#e4e4e4"></div><div class="abs" style="top:668.2px;left:13px;height:1px;width:4px;background:#e4e4e4"></div><div class="abs" style="top:678.8px;left:13px;height:1px;width:4px;background:#e4e4e4"></div><div class="rn" style="left:2px;top:606.3px;transform:rotate(-90deg);transform-origin:center;width:10px;height:10px;line-height:10px;text-align:center">8</div><div class="abs" style="top:689.3px;left:0;height:1px;width:17px;background:#dedede"></div><div class="abs" style="top:699.9px;left:13px;height:1px;width:4px;background:#e4e4e4"></div><div class="rn" style="left:2px;top:690.8px;transform:rotate(-90deg);transform-origin:center;width:10px;height:10px;line-height:10px;text-align:center">9</div><div class="abs" style="left:0;top:0;width:17px;height:18px;background:#f3f3f3;border-right:1px solid #e2e2e2;border-bottom:1px solid #e2e2e2"></div><div class="abs" style="left:3px;top:18px;width:6px;height:1px;background:#999"></div><!--/VRULER--></div>
<div id="vscroll">
  <div class="abs" style="left:1px;top:16px;width:12px;height:22px;background:#c1c1c1"></div>
  <div class="abs" style="left:4px;top:5px;border:3.5px solid transparent;border-top:none;border-bottom:4px solid #444"></div>
  <div class="abs" style="left:4px;top:699px;border:3.5px solid transparent;border-bottom:none;border-top:4px solid #444"></div>
  <div class="abs" style="left:0;top:708px;width:16px;height:11px;background:#e9e9e9"></div>
</div>
<div id="hscroll">
  <div class="abs" style="left:28px;top:1px;width:65px;height:11px;background:#c1c1c1"></div>
  <div class="abs" style="left:4px;top:3px;border:3.5px solid transparent;border-left:none;border-right:4px solid #222"></div>
  <div class="abs" style="left:1186px;top:3px;border:3.5px solid transparent;border-right:none;border-left:4px solid #222"></div>
</div>

<!-- ARTWORK -->
<svg class="abs" style="left:0;top:0" width="1500" height="841" viewBox="0 0 1500 841">
<!--ART-->
<path d="M781.9 690.0 L842.3 690.0 C842.8 694.2 844.2 707.5 845.0 715.0 C845.8 722.5 846.9 731.5 847.3 734.8 C847.4 736.5 848.2 742.3 847.8 745.0 C847.4 747.7 846.4 749.3 844.8 751.0 C843.2 752.7 840.5 754.1 838.0 755.0 C835.5 755.9 831.2 756.1 829.9 756.3 L797.4 756.3 C796.0 756.1 791.4 755.9 789.0 755.0 C786.6 754.1 784.8 752.7 783.2 751.0 C781.6 749.3 780.2 747.7 779.6 745.0 C779.0 742.3 779.9 736.5 779.9 734.8 C780.0 731.5 780.2 722.5 780.5 715.0 C780.8 707.5 781.7 694.2 781.9 690.0 Z" fill="#402a05"/>
<g fill="#82b04b" stroke="#557f2c" stroke-width="1.9" stroke-linejoin="round">
<path d="M813.0 191.0 L829.8 224.0 L869.2 229.1 L842.0 255.8 L849.0 296.8 L831.8 289.0 L813.0 300.0 L794.4 289.0 L779.7 295.6 L786.3 255.8 L758.4 230.5 L796.4 224.0 Z"/>
<path d="M813.0 280.0 L831.8 289.0 C833.5 291.1 838.7 297.4 842.2 301.4 C845.7 305.4 849.3 309.3 852.9 313.2 C856.5 317.1 860.0 321.4 863.6 325.0 C867.2 328.6 870.7 331.6 874.3 334.6 C877.9 337.6 883.2 341.8 885.0 343.2 C886.1 344.1 890.3 346.9 891.6 348.5 C892.9 350.1 893.0 351.2 892.6 352.8 C892.2 354.4 889.8 357.3 889.3 358.2 C887.7 359.3 882.6 362.9 879.6 364.6 C876.6 366.3 872.5 367.9 871.1 368.6 C873.9 371.9 881.3 381.4 887.9 388.5 C894.5 395.6 903.0 404.6 910.5 411.0 C918.0 417.4 929.2 424.2 933.0 426.9 C934.4 428.0 940.4 431.5 941.2 433.8 C942.0 436.1 938.2 439.5 937.6 440.6 C936.2 441.8 932.4 445.7 929.0 448.0 C925.6 450.3 919.1 453.2 917.1 454.3 C920.0 457.2 929.6 467.6 934.2 471.9 C938.9 476.2 943.2 478.6 945.0 480.0 L945.0 600.0 L886.2 663.6 C885.1 663.1 881.6 661.3 879.6 660.6 C877.6 659.9 875.1 659.6 874.2 659.4 C873.8 660.3 873.1 662.5 871.8 664.8 C870.5 667.1 869.1 670.1 866.4 673.2 C863.7 676.3 859.6 680.4 855.6 683.4 C851.6 686.4 847.0 689.3 842.4 691.2 C837.8 693.1 832.8 693.9 828.0 694.8 C823.2 695.7 819.2 696.6 813.6 696.6 C808.0 696.6 800.0 695.9 794.4 694.8 C788.8 693.7 784.4 692.0 780.0 690.0 C775.6 688.0 771.6 685.6 768.0 682.8 C764.4 680.0 760.8 676.2 758.4 673.2 C756.0 670.2 754.7 667.1 753.6 664.8 C752.5 662.5 752.1 660.3 751.8 659.4 C750.5 659.8 747.2 660.8 744.0 661.8 C740.8 662.8 734.5 664.8 732.6 665.4 L690.0 600.0 L680.0 480.0 C683.2 477.7 694.5 470.3 699.5 466.0 C704.5 461.7 708.1 456.2 709.8 454.3 C708.0 453.1 702.4 449.3 699.0 447.0 C695.6 444.7 691.1 441.6 689.5 440.5 C688.9 439.4 685.5 435.9 686.0 433.6 C686.5 431.4 691.4 428.1 692.5 427.0 C696.4 424.3 708.1 417.4 715.7 411.0 C723.3 404.6 731.6 395.6 738.3 388.5 C744.9 381.4 752.7 371.9 755.6 368.6 C754.1 367.9 749.9 366.3 746.8 364.6 C743.7 362.9 738.7 359.3 737.1 358.2 C736.5 357.3 734.1 354.4 733.7 352.8 C733.3 351.2 733.5 350.1 734.8 348.5 C736.1 346.9 740.3 344.1 741.4 343.2 C743.2 341.8 748.5 337.6 752.1 334.6 C755.7 331.6 759.2 328.6 762.8 325.0 C766.4 321.4 769.9 317.1 773.5 313.2 C777.1 309.3 780.6 305.5 784.2 301.4 C787.8 297.3 793.1 290.7 794.9 288.6 L813.0 280.0 Z"/>
<path d="M540.7 662 A96 95.5 0 1 0 732.7 662 A96 95.5 0 1 0 540.7 662 Z"/>
<path d="M601.8 467.0 C601.0 462.2 598.6 446.2 597.2 438.0 C595.8 429.8 594.1 421.3 593.5 418.0 C593.5 416.9 592.6 413.1 593.4 411.5 C594.2 409.9 597.4 408.8 598.2 408.2 C601.0 407.6 608.9 405.6 615.0 404.8 C621.1 404.1 628.2 403.8 634.9 403.7 C641.6 403.6 648.7 403.9 655.0 404.5 C661.3 405.1 669.6 407.1 672.5 407.6 C673.4 408.1 676.9 409.2 677.8 410.8 C678.7 412.4 678.0 416.0 678.1 417.0 C677.5 420.5 675.7 429.6 674.3 438.0 C672.9 446.4 670.5 462.7 669.8 467.6 C672.2 466.8 679.6 464.4 684.0 462.8 C688.4 461.2 693.9 458.6 695.9 457.8 L700.2 466.2 L712.0 470.0 L712.0 560.0 L720.0 600.0 L560.0 600.0 L573.7 582.4 C572.9 580.3 569.1 574.5 568.7 569.9 C568.3 565.3 570.2 558.2 571.2 554.9 C572.2 551.6 574.3 550.7 574.9 549.9 C574.4 547.4 572.2 540.0 572.0 535.0 C571.8 530.0 572.5 525.6 573.7 519.9 C575.0 514.2 576.9 506.5 579.5 501.0 C582.1 495.5 587.7 489.2 589.3 486.9 L568.8 477.0 L576.0 459.5 L601.8 467.0 Z"/>
<path d="M585.0 600.0 L573.0 582.6 L567.8 586.3 L555.9 570.9 C556.5 569.5 558.5 566.0 559.5 562.6 C560.5 559.2 561.6 554.2 561.8 550.7 C562.0 547.2 561.7 543.7 560.6 541.8 C559.5 539.9 557.0 539.2 555.3 539.2 C553.6 539.2 551.6 540.4 550.5 541.5 C549.4 542.6 549.5 544.0 548.8 545.9 C548.1 547.8 546.8 551.8 546.4 553.0 C545.6 550.6 543.0 542.6 541.6 538.8 C540.2 535.0 539.6 531.9 538.2 530.0 C536.8 528.1 534.9 527.1 533.3 527.3 C531.7 527.5 529.7 529.1 528.8 531.0 C527.9 532.9 527.9 535.7 527.9 538.8 C527.9 541.9 528.4 547.7 528.5 549.5 C527.3 548.4 523.6 544.5 521.4 543.0 C519.2 541.5 517.3 540.6 515.5 540.4 C513.7 540.2 511.5 541.1 510.5 542.0 C509.5 542.9 509.1 544.5 509.3 546.0 C509.6 547.5 510.6 549.0 512.0 551.0 C513.4 553.0 514.8 555.3 517.8 557.8 C520.8 560.3 526.1 563.7 529.7 566.1 C533.3 568.5 536.2 568.9 539.2 572.1 C542.2 575.3 544.5 580.9 547.6 585.2 C550.7 589.6 556.1 596.0 557.8 598.2 C557.1 599.5 554.8 603.2 553.5 606.0 C552.2 608.8 551.1 611.8 550.0 615.0 C548.9 618.2 547.9 621.5 547.0 625.0 C546.1 628.5 545.0 634.2 544.6 636.0 L575.0 636.0 Z"/>
<path d="M886.2 661 A96.5 96.2 0 1 0 1079.2 661 A96.5 96.2 0 1 0 886.2 661 Z"/>
<path d="M934.2 471.9  C935.6 469.2 938.9 461.5 942.8 455.8 C946.7 450.1 951.3 442.3 957.5 437.5 C963.7 432.7 973.0 429.2 979.9 427.0 C986.8 424.8 991.8 424.0 998.9 424.2 C1006.0 424.4 1014.2 426.2 1022.7 428.4 C1031.2 430.6 1045.5 436.0 1050.0 437.5 C1050.8 439.6 1054.7 447.0 1055.0 450.0 C1055.3 453.0 1052.5 454.8 1052.0 455.7 C1051.0 456.1 1047.5 456.1 1045.7 457.9 C1043.9 459.7 1042.3 463.2 1041.4 466.4 C1040.5 469.6 1040.6 475.3 1040.4 477.1 C1041.3 478.7 1043.6 483.6 1045.7 486.8 C1047.8 490.0 1051.4 493.0 1053.2 496.4 C1055.0 499.8 1056.2 503.5 1056.4 507.1 C1056.6 510.7 1055.7 515.0 1054.3 517.9 C1052.9 520.8 1049.3 522.2 1047.9 524.3 C1046.5 526.4 1046.2 527.5 1045.7 530.7 C1045.2 533.9 1044.8 540.5 1044.6 543.6 C1044.4 546.7 1044.8 548.5 1044.8 549.5 C1045.5 551.4 1048.0 557.4 1048.9 560.7 C1049.8 564.0 1050.4 565.7 1050.0 569.3 C1049.6 572.9 1047.2 580.1 1046.6 582.3 C1048.6 583.0 1055.4 585.8 1058.4 586.7 C1061.4 587.6 1063.7 587.4 1064.8 587.5 L1058.0 612.0 L900.0 610.0 C900.6 606.3 900.6 592.8 903.8 587.9 C907.0 583.0 916.6 582.0 919.2 580.8 C918.6 578.4 915.7 571.3 915.7 566.5 C915.7 561.7 918.6 554.6 919.2 552.2 C919.4 549.0 919.8 539.9 920.4 533.2 C921.0 526.5 922.4 515.4 922.8 511.8 C922.2 510.6 920.0 507.5 919.2 504.7 C918.4 501.9 917.7 499.1 918.1 495.1 C918.5 491.1 918.9 484.8 921.6 480.9 C924.3 477.0 932.1 473.4 934.2 471.9 Z"/>
<path d="M1040.0 575.0 L1046.6 582.5 C1049.2 583.2 1057.4 585.4 1062.1 586.8 C1066.8 588.2 1070.8 589.7 1074.9 591.0 C1079.0 592.3 1082.6 594.4 1086.7 594.8 C1090.8 595.2 1095.1 593.5 1099.6 593.2 C1104.1 592.9 1109.6 592.8 1113.5 593.2 C1117.4 593.6 1120.9 594.5 1123.1 595.8 C1125.3 597.0 1126.7 599.0 1126.9 600.7 C1127.1 602.4 1125.9 604.8 1124.2 606.0 C1122.5 607.2 1119.4 607.9 1116.7 608.2 C1114.0 608.5 1109.5 607.7 1108.1 607.6 C1109.2 608.8 1112.6 612.2 1114.5 614.6 C1116.4 617.0 1118.9 620.0 1119.4 622.1 C1119.9 624.2 1118.9 626.3 1117.7 627.4 C1116.5 628.5 1114.5 629.0 1112.4 628.5 C1110.3 628.0 1108.3 626.5 1104.9 624.2 C1101.5 621.9 1094.2 616.2 1092.1 614.6 C1092.5 616.2 1094.5 621.7 1094.7 624.2 C1094.9 626.7 1094.2 628.3 1093.1 629.6 C1092.0 630.9 1089.9 632.2 1088.3 632.2 C1086.7 632.2 1085.0 631.3 1083.5 629.6 C1082.0 627.9 1080.5 625.1 1079.2 622.1 C1078.0 619.1 1077.0 614.2 1076.0 611.4 C1075.0 608.6 1074.5 606.9 1073.5 605.5 C1072.5 604.1 1070.6 603.4 1070.0 603.0 L1063.2 601.2 C1063.8 602.2 1065.4 605.0 1066.5 607.0 C1067.6 609.0 1068.6 611.2 1069.6 613.5 C1070.6 615.8 1071.6 618.3 1072.5 621.0 C1073.4 623.7 1074.2 626.4 1074.9 629.6 C1075.7 632.8 1076.7 638.3 1077.0 640.0 L1050.0 640.0 Z"/>
<circle cx="1070.4" cy="445" r="20" />
</g>
<g fill="#82b04b">
<path d="M813.0 191.0 L829.8 224.0 L869.2 229.1 L842.0 255.8 L849.0 296.8 L831.8 289.0 L813.0 300.0 L794.4 289.0 L779.7 295.6 L786.3 255.8 L758.4 230.5 L796.4 224.0 Z"/>
<path d="M813.0 280.0 L831.8 289.0 C833.5 291.1 838.7 297.4 842.2 301.4 C845.7 305.4 849.3 309.3 852.9 313.2 C856.5 317.1 860.0 321.4 863.6 325.0 C867.2 328.6 870.7 331.6 874.3 334.6 C877.9 337.6 883.2 341.8 885.0 343.2 C886.1 344.1 890.3 346.9 891.6 348.5 C892.9 350.1 893.0 351.2 892.6 352.8 C892.2 354.4 889.8 357.3 889.3 358.2 C887.7 359.3 882.6 362.9 879.6 364.6 C876.6 366.3 872.5 367.9 871.1 368.6 C873.9 371.9 881.3 381.4 887.9 388.5 C894.5 395.6 903.0 404.6 910.5 411.0 C918.0 417.4 929.2 424.2 933.0 426.9 C934.4 428.0 940.4 431.5 941.2 433.8 C942.0 436.1 938.2 439.5 937.6 440.6 C936.2 441.8 932.4 445.7 929.0 448.0 C925.6 450.3 919.1 453.2 917.1 454.3 C920.0 457.2 929.6 467.6 934.2 471.9 C938.9 476.2 943.2 478.6 945.0 480.0 L945.0 600.0 L886.2 663.6 C885.1 663.1 881.6 661.3 879.6 660.6 C877.6 659.9 875.1 659.6 874.2 659.4 C873.8 660.3 873.1 662.5 871.8 664.8 C870.5 667.1 869.1 670.1 866.4 673.2 C863.7 676.3 859.6 680.4 855.6 683.4 C851.6 686.4 847.0 689.3 842.4 691.2 C837.8 693.1 832.8 693.9 828.0 694.8 C823.2 695.7 819.2 696.6 813.6 696.6 C808.0 696.6 800.0 695.9 794.4 694.8 C788.8 693.7 784.4 692.0 780.0 690.0 C775.6 688.0 771.6 685.6 768.0 682.8 C764.4 680.0 760.8 676.2 758.4 673.2 C756.0 670.2 754.7 667.1 753.6 664.8 C752.5 662.5 752.1 660.3 751.8 659.4 C750.5 659.8 747.2 660.8 744.0 661.8 C740.8 662.8 734.5 664.8 732.6 665.4 L690.0 600.0 L680.0 480.0 C683.2 477.7 694.5 470.3 699.5 466.0 C704.5 461.7 708.1 456.2 709.8 454.3 C708.0 453.1 702.4 449.3 699.0 447.0 C695.6 444.7 691.1 441.6 689.5 440.5 C688.9 439.4 685.5 435.9 686.0 433.6 C686.5 431.4 691.4 428.1 692.5 427.0 C696.4 424.3 708.1 417.4 715.7 411.0 C723.3 404.6 731.6 395.6 738.3 388.5 C744.9 381.4 752.7 371.9 755.6 368.6 C754.1 367.9 749.9 366.3 746.8 364.6 C743.7 362.9 738.7 359.3 737.1 358.2 C736.5 357.3 734.1 354.4 733.7 352.8 C733.3 351.2 733.5 350.1 734.8 348.5 C736.1 346.9 740.3 344.1 741.4 343.2 C743.2 341.8 748.5 337.6 752.1 334.6 C755.7 331.6 759.2 328.6 762.8 325.0 C766.4 321.4 769.9 317.1 773.5 313.2 C777.1 309.3 780.6 305.5 784.2 301.4 C787.8 297.3 793.1 290.7 794.9 288.6 L813.0 280.0 Z"/>
<path d="M540.7 662 A96 95.5 0 1 0 732.7 662 A96 95.5 0 1 0 540.7 662 Z"/>
<path d="M601.8 467.0 C601.0 462.2 598.6 446.2 597.2 438.0 C595.8 429.8 594.1 421.3 593.5 418.0 C593.5 416.9 592.6 413.1 593.4 411.5 C594.2 409.9 597.4 408.8 598.2 408.2 C601.0 407.6 608.9 405.6 615.0 404.8 C621.1 404.1 628.2 403.8 634.9 403.7 C641.6 403.6 648.7 403.9 655.0 404.5 C661.3 405.1 669.6 407.1 672.5 407.6 C673.4 408.1 676.9 409.2 677.8 410.8 C678.7 412.4 678.0 416.0 678.1 417.0 C677.5 420.5 675.7 429.6 674.3 438.0 C672.9 446.4 670.5 462.7 669.8 467.6 C672.2 466.8 679.6 464.4 684.0 462.8 C688.4 461.2 693.9 458.6 695.9 457.8 L700.2 466.2 L712.0 470.0 L712.0 560.0 L720.0 600.0 L560.0 600.0 L573.7 582.4 C572.9 580.3 569.1 574.5 568.7 569.9 C568.3 565.3 570.2 558.2 571.2 554.9 C572.2 551.6 574.3 550.7 574.9 549.9 C574.4 547.4 572.2 540.0 572.0 535.0 C571.8 530.0 572.5 525.6 573.7 519.9 C575.0 514.2 576.9 506.5 579.5 501.0 C582.1 495.5 587.7 489.2 589.3 486.9 L568.8 477.0 L576.0 459.5 L601.8 467.0 Z"/>
<path d="M585.0 600.0 L573.0 582.6 L567.8 586.3 L555.9 570.9 C556.5 569.5 558.5 566.0 559.5 562.6 C560.5 559.2 561.6 554.2 561.8 550.7 C562.0 547.2 561.7 543.7 560.6 541.8 C559.5 539.9 557.0 539.2 555.3 539.2 C553.6 539.2 551.6 540.4 550.5 541.5 C549.4 542.6 549.5 544.0 548.8 545.9 C548.1 547.8 546.8 551.8 546.4 553.0 C545.6 550.6 543.0 542.6 541.6 538.8 C540.2 535.0 539.6 531.9 538.2 530.0 C536.8 528.1 534.9 527.1 533.3 527.3 C531.7 527.5 529.7 529.1 528.8 531.0 C527.9 532.9 527.9 535.7 527.9 538.8 C527.9 541.9 528.4 547.7 528.5 549.5 C527.3 548.4 523.6 544.5 521.4 543.0 C519.2 541.5 517.3 540.6 515.5 540.4 C513.7 540.2 511.5 541.1 510.5 542.0 C509.5 542.9 509.1 544.5 509.3 546.0 C509.6 547.5 510.6 549.0 512.0 551.0 C513.4 553.0 514.8 555.3 517.8 557.8 C520.8 560.3 526.1 563.7 529.7 566.1 C533.3 568.5 536.2 568.9 539.2 572.1 C542.2 575.3 544.5 580.9 547.6 585.2 C550.7 589.6 556.1 596.0 557.8 598.2 C557.1 599.5 554.8 603.2 553.5 606.0 C552.2 608.8 551.1 611.8 550.0 615.0 C548.9 618.2 547.9 621.5 547.0 625.0 C546.1 628.5 545.0 634.2 544.6 636.0 L575.0 636.0 Z"/>
<path d="M886.2 661 A96.5 96.2 0 1 0 1079.2 661 A96.5 96.2 0 1 0 886.2 661 Z"/>
<path d="M934.2 471.9  C935.6 469.2 938.9 461.5 942.8 455.8 C946.7 450.1 951.3 442.3 957.5 437.5 C963.7 432.7 973.0 429.2 979.9 427.0 C986.8 424.8 991.8 424.0 998.9 424.2 C1006.0 424.4 1014.2 426.2 1022.7 428.4 C1031.2 430.6 1045.5 436.0 1050.0 437.5 C1050.8 439.6 1054.7 447.0 1055.0 450.0 C1055.3 453.0 1052.5 454.8 1052.0 455.7 C1051.0 456.1 1047.5 456.1 1045.7 457.9 C1043.9 459.7 1042.3 463.2 1041.4 466.4 C1040.5 469.6 1040.6 475.3 1040.4 477.1 C1041.3 478.7 1043.6 483.6 1045.7 486.8 C1047.8 490.0 1051.4 493.0 1053.2 496.4 C1055.0 499.8 1056.2 503.5 1056.4 507.1 C1056.6 510.7 1055.7 515.0 1054.3 517.9 C1052.9 520.8 1049.3 522.2 1047.9 524.3 C1046.5 526.4 1046.2 527.5 1045.7 530.7 C1045.2 533.9 1044.8 540.5 1044.6 543.6 C1044.4 546.7 1044.8 548.5 1044.8 549.5 C1045.5 551.4 1048.0 557.4 1048.9 560.7 C1049.8 564.0 1050.4 565.7 1050.0 569.3 C1049.6 572.9 1047.2 580.1 1046.6 582.3 C1048.6 583.0 1055.4 585.8 1058.4 586.7 C1061.4 587.6 1063.7 587.4 1064.8 587.5 L1058.0 612.0 L900.0 610.0 C900.6 606.3 900.6 592.8 903.8 587.9 C907.0 583.0 916.6 582.0 919.2 580.8 C918.6 578.4 915.7 571.3 915.7 566.5 C915.7 561.7 918.6 554.6 919.2 552.2 C919.4 549.0 919.8 539.9 920.4 533.2 C921.0 526.5 922.4 515.4 922.8 511.8 C922.2 510.6 920.0 507.5 919.2 504.7 C918.4 501.9 917.7 499.1 918.1 495.1 C918.5 491.1 918.9 484.8 921.6 480.9 C924.3 477.0 932.1 473.4 934.2 471.9 Z"/>
<path d="M1040.0 575.0 L1046.6 582.5 C1049.2 583.2 1057.4 585.4 1062.1 586.8 C1066.8 588.2 1070.8 589.7 1074.9 591.0 C1079.0 592.3 1082.6 594.4 1086.7 594.8 C1090.8 595.2 1095.1 593.5 1099.6 593.2 C1104.1 592.9 1109.6 592.8 1113.5 593.2 C1117.4 593.6 1120.9 594.5 1123.1 595.8 C1125.3 597.0 1126.7 599.0 1126.9 600.7 C1127.1 602.4 1125.9 604.8 1124.2 606.0 C1122.5 607.2 1119.4 607.9 1116.7 608.2 C1114.0 608.5 1109.5 607.7 1108.1 607.6 C1109.2 608.8 1112.6 612.2 1114.5 614.6 C1116.4 617.0 1118.9 620.0 1119.4 622.1 C1119.9 624.2 1118.9 626.3 1117.7 627.4 C1116.5 628.5 1114.5 629.0 1112.4 628.5 C1110.3 628.0 1108.3 626.5 1104.9 624.2 C1101.5 621.9 1094.2 616.2 1092.1 614.6 C1092.5 616.2 1094.5 621.7 1094.7 624.2 C1094.9 626.7 1094.2 628.3 1093.1 629.6 C1092.0 630.9 1089.9 632.2 1088.3 632.2 C1086.7 632.2 1085.0 631.3 1083.5 629.6 C1082.0 627.9 1080.5 625.1 1079.2 622.1 C1078.0 619.1 1077.0 614.2 1076.0 611.4 C1075.0 608.6 1074.5 606.9 1073.5 605.5 C1072.5 604.1 1070.6 603.4 1070.0 603.0 L1063.2 601.2 C1063.8 602.2 1065.4 605.0 1066.5 607.0 C1067.6 609.0 1068.6 611.2 1069.6 613.5 C1070.6 615.8 1071.6 618.3 1072.5 621.0 C1073.4 623.7 1074.2 626.4 1074.9 629.6 C1075.7 632.8 1076.7 638.3 1077.0 640.0 L1050.0 640.0 Z"/>
<circle cx="1070.4" cy="445" r="20" />
</g>
<path d="M813.2 289.0 C811.1 291.2 805.1 297.4 800.3 302.5 C795.5 307.6 789.6 314.1 784.2 319.6 C778.9 325.1 773.6 330.4 768.2 335.7 C762.9 341.0 754.8 348.6 752.1 351.2 C754.1 352.2 759.8 355.7 764.0 357.2 C768.2 358.7 773.8 359.2 777.6 360.0 C781.4 360.8 784.3 360.8 786.7 361.7 C789.1 362.6 790.5 363.6 791.8 365.1 C793.1 366.6 793.2 368.9 794.6 370.8 C796.0 372.7 797.5 375.1 800.3 376.5 C803.1 377.9 807.6 379.0 811.6 379.3 C815.6 379.6 820.9 379.1 824.1 378.2 C827.3 377.3 829.2 376.2 830.9 374.2 C832.6 372.2 833.0 368.3 834.3 366.3 C835.6 364.3 836.3 363.4 838.8 362.3 C841.2 361.2 844.9 361.0 849.0 360.0 C853.1 359.0 859.4 357.6 863.7 356.1 C868.0 354.6 873.1 351.9 875.0 351.0 C872.2 348.4 863.7 340.9 858.2 335.7 C852.7 330.5 847.6 325.1 842.2 319.6 C836.9 314.1 830.9 307.6 826.1 302.5 C821.3 297.4 815.4 291.2 813.2 289.0 Z" fill="#9ccb60" stroke="#557f2c" stroke-width="1" stroke-linejoin="round"/>
<path d="M769.1 372.5 C771.3 372.7 779.4 372.6 782.1 373.6 C784.8 374.6 784.2 376.9 785.5 378.7 C786.8 380.5 788.0 382.6 790.1 384.4 C792.2 386.2 794.4 388.2 798.0 389.5 C801.6 390.8 807.1 392.0 811.6 392.1 C816.1 392.2 821.2 391.4 825.2 390.1 C829.2 388.8 832.9 386.5 835.4 384.4 C837.9 382.3 839.2 379.4 840.5 377.6 C841.8 375.8 840.4 374.6 843.3 373.6 C846.2 372.6 855.6 371.8 858.1 371.4 C860.8 375.0 867.5 385.6 874.0 393.0 C880.5 400.4 888.4 409.3 897.0 416.0 C905.6 422.7 920.9 430.2 925.7 433.0 C923.5 434.4 917.2 439.3 912.2 441.1 C907.2 442.9 901.7 443.8 896.0 443.8 C890.3 443.8 884.0 442.6 878.0 441.1 C872.0 439.6 864.8 436.3 860.0 434.8 C855.2 433.3 852.1 432.1 849.2 432.1 C846.4 432.1 844.5 433.2 842.9 434.8 C841.2 436.4 840.6 439.1 839.3 442.0 C837.9 444.9 836.8 449.3 834.8 451.9 C832.8 454.4 830.9 456.1 827.6 457.3 C824.3 458.5 819.2 459.1 815.0 459.1 C810.8 459.1 806.0 458.7 802.4 457.3 C798.8 455.9 795.8 453.6 793.4 451.0 C791.0 448.4 789.5 444.7 788.0 442.0 C786.5 439.3 786.2 436.4 784.4 434.8 C782.6 433.2 780.2 432.0 777.2 432.1 C774.2 432.2 770.6 434.4 766.4 435.7 C762.2 437.0 757.4 439.0 752.0 440.2 C746.6 441.4 740.0 442.9 734.0 442.9 C728.0 442.9 721.2 441.8 716.0 440.2 C710.8 438.6 704.8 434.2 702.5 433.0 C706.9 430.2 720.8 422.7 729.0 416.0 C737.2 409.3 745.3 400.2 752.0 393.0 C758.7 385.8 766.2 375.9 769.1 372.5 Z" fill="#9ccb60" stroke="#557f2c" stroke-width="1" stroke-linejoin="round"/>
<path d="M723.6 456.2 C725.3 455.9 729.3 455.1 734.0 454.2 C738.7 453.3 746.6 452.1 752.0 451.0 C757.4 449.9 762.5 448.4 766.4 447.4 C770.3 446.3 773.3 444.4 775.4 444.7 C777.5 445.0 777.6 447.1 779.0 449.2 C780.4 451.3 781.4 454.6 783.5 457.3 C785.6 460.0 787.9 463.1 791.6 465.4 C795.4 467.6 801.5 469.8 806.0 470.8 C810.5 471.9 814.4 472.0 818.6 471.7 C822.8 471.4 827.3 470.6 831.2 469.0 C835.1 467.4 839.3 464.5 842.0 461.8 C844.7 459.1 846.0 455.5 847.4 452.8 C848.8 450.1 848.0 446.7 850.1 445.6 C852.2 444.6 855.4 445.4 860.0 446.5 C864.6 447.6 872.0 450.5 878.0 451.9 C884.0 453.3 891.6 454.2 896.0 455.0 C900.4 455.8 903.1 456.2 904.5 456.5 C905.9 458.3 910.1 463.5 912.8 467.1 C915.5 470.8 919.5 476.5 920.9 478.4 C920.3 480.1 917.6 485.0 917.1 488.5 C916.6 492.0 916.9 495.9 917.6 499.2 C918.3 502.4 920.9 506.5 921.5 508.0 L922.0 512.0 C921.6 514.5 920.0 522.1 919.5 527.0 C919.0 531.9 919.2 539.0 919.2 541.4 C917.8 541.3 913.6 541.5 910.7 540.9 C907.8 540.3 904.9 538.8 901.7 538.0 C898.5 537.2 894.3 535.9 891.5 536.3 C888.7 536.7 887.0 538.2 884.7 540.3 C882.4 542.4 880.4 546.7 877.9 548.8 C875.4 550.9 872.5 552.3 869.9 552.8 C867.2 553.3 864.8 552.5 862.0 551.6 C859.2 550.7 855.7 548.3 852.9 547.1 C850.1 545.9 847.5 544.2 845.0 544.3 C842.5 544.4 840.1 546.0 838.2 547.7 C836.3 549.4 835.8 552.2 833.7 554.5 C831.6 556.8 828.7 559.7 825.7 561.3 C822.7 562.9 818.9 564.0 815.5 564.1 C812.1 564.2 808.5 563.2 805.3 561.8 C802.1 560.4 798.8 558.0 796.3 555.6 C793.8 553.2 792.9 549.1 790.6 547.1 C788.3 545.1 785.9 543.7 782.7 543.7 C779.5 543.7 774.5 545.8 771.3 547.1 C768.1 548.4 764.7 550.9 763.4 551.6 C762.8 550.7 761.3 547.1 760.0 546.0 C758.7 544.9 756.4 545.2 755.7 545.0 C754.9 545.3 752.6 547.2 751.0 547.0 C749.4 546.8 747.8 545.0 746.1 543.7 C744.4 542.4 743.0 540.2 741.0 539.0 C739.0 537.8 737.7 536.8 734.2 536.6 C730.7 536.4 725.8 537.2 720.0 538.0 C714.2 538.8 703.1 540.8 699.7 541.3 C699.9 538.5 701.5 530.2 701.0 524.7 C700.5 519.2 698.8 513.1 697.0 508.0 C695.2 502.9 691.6 496.2 690.5 493.9 C692.5 491.6 699.0 484.5 702.8 480.0 C706.6 475.5 710.0 471.1 713.5 467.1 C717.0 463.1 721.9 458.0 723.6 456.2 Z" fill="#9ccb60" stroke="#557f2c" stroke-width="1" stroke-linejoin="round"/>
<path d="M701.2 553.2 L726.4 550.5 C726.2 552.6 725.5 558.8 725.0 563.0 C724.5 567.2 723.5 573.5 723.2 575.6 L706.0 585.8 L700.2 581.5 C700.8 579.1 703.7 571.8 703.9 567.1 C704.1 562.4 701.7 555.5 701.2 553.2 Z" fill="#9ccb60" stroke="#557f2c" stroke-width="1" stroke-linejoin="round"/>
<path d="M771.3 561.5 C772.2 560.9 775.2 558.8 777.0 557.9 C778.8 557.0 781.2 556.5 782.1 556.2 C782.5 556.9 783.2 558.3 784.4 560.1 C785.6 561.9 787.1 564.7 789.5 566.9 C791.9 569.1 795.1 571.6 798.5 573.2 C801.9 574.8 806.1 576.2 809.9 576.6 C813.7 577.0 817.4 576.5 821.2 575.4 C825.0 574.3 829.1 572.6 832.5 570.3 C835.9 567.9 839.3 563.6 841.6 561.3 C843.9 558.9 844.4 556.8 846.1 556.2 C847.8 555.6 849.5 556.9 851.8 557.9 C854.1 558.9 856.9 561.3 859.7 562.4 C862.5 563.5 865.6 564.9 868.8 564.7 C872.0 564.5 876.0 563.2 879.0 561.3 C882.0 559.4 884.4 555.5 886.9 553.3 C889.4 551.1 891.1 548.9 893.7 548.2 C896.4 547.6 899.8 548.7 902.8 549.4 C905.8 550.1 909.3 551.6 911.9 552.2 C914.5 552.8 917.1 552.7 918.1 552.8 C917.7 553.8 916.3 556.5 915.8 559.0 C915.3 561.5 915.1 565.3 915.3 568.1 C915.5 570.9 916.4 573.7 917.0 576.0 C917.6 578.3 918.8 580.8 919.2 581.7 L902.3 601.2 C901.1 604.0 897.1 612.8 895.0 618.0 C892.9 623.2 891.3 626.9 889.8 632.4 C888.3 637.9 886.8 647.9 886.2 651.0 C884.9 650.5 881.1 648.5 878.4 648.0 C875.7 647.5 872.4 647.3 870.0 648.0 C867.6 648.7 865.4 650.4 864.0 652.2 C862.6 654.0 863.0 656.3 861.6 658.8 C860.2 661.3 858.6 664.3 855.6 667.2 C852.6 670.1 848.2 673.8 843.6 676.2 C839.0 678.6 833.6 680.3 828.0 681.6 C822.4 682.9 816.0 684.1 810.0 684.0 C804.0 683.9 797.4 682.7 792.0 681.0 C786.6 679.3 781.6 676.5 777.6 673.8 C773.6 671.1 770.4 667.8 768.0 664.8 C765.6 661.8 764.6 658.2 763.2 655.8 C761.8 653.4 761.4 651.8 759.6 650.4 C757.8 649.0 755.0 647.6 752.4 647.4 C749.8 647.2 747.2 648.3 744.0 649.2 C740.8 650.1 735.0 652.2 733.2 652.8 C732.8 650.7 731.6 644.2 730.5 640.0 C729.4 635.8 728.1 632.2 726.5 627.4 C724.9 622.6 722.7 616.0 721.0 611.0 C719.3 606.0 717.0 599.8 716.2 597.5 C717.7 596.3 721.7 592.7 725.0 590.5 C728.3 588.3 731.1 585.8 736.0 584.2 C740.9 582.6 749.4 582.1 754.2 581.0 C759.0 579.9 761.9 578.5 764.9 577.3 C767.9 576.1 770.6 575.5 772.4 574.0 C774.2 572.5 775.2 569.9 775.6 568.2 C776.0 566.5 775.2 565.1 774.5 563.9 C773.8 562.7 771.8 561.7 771.3 561.2 Z" fill="#9ccb60" stroke="#557f2c" stroke-width="1" stroke-linejoin="round"/>
<path d="M925.0 578.0 C923.9 578.7 922.9 580.5 918.5 582.1 C914.1 583.7 905.4 585.8 898.5 587.8 C891.6 589.8 883.1 593.4 877.1 594.3 C871.1 595.2 867.6 593.2 862.8 593.1 C858.0 593.0 852.5 592.8 848.5 593.5 C844.5 594.2 840.6 595.7 838.6 597.1 C836.6 598.5 836.2 600.6 836.4 602.1 C836.6 603.6 838.0 605.2 840.0 606.0 C842.0 606.8 845.6 607.0 848.5 607.1 C851.4 607.2 855.7 606.8 857.1 606.8 C855.7 608.0 850.6 611.7 848.5 614.2 C846.4 616.8 844.9 620.0 844.5 622.1 C844.1 624.2 845.1 626.1 846.4 627.1 C847.7 628.1 849.6 629.2 852.1 628.2 C854.6 627.2 858.0 623.8 861.4 621.4 C864.8 619.0 870.9 615.1 872.8 613.9 C872.3 615.4 870.1 620.4 869.7 622.8 C869.4 625.2 869.8 626.9 870.7 628.5 C871.6 630.1 873.2 632.4 874.9 632.4 C876.6 632.4 879.0 630.6 880.7 628.5 C882.4 626.4 883.4 623.7 884.9 619.9 C886.4 616.1 889.1 608.1 889.9 605.7 L902.1 601.4 L925.0 600.0 Z" fill="#82b04b" stroke="#557f2c" stroke-width="1" stroke-linejoin="round"/>
<path d="M694.0 541.5 C695.0 541.4 695.9 541.2 700.2 540.9 C704.5 540.6 714.6 540.5 720.0 539.8 C725.4 539.1 729.4 536.9 732.8 536.6 C736.2 536.3 738.2 537.1 740.3 538.2 C742.4 539.3 744.0 541.5 745.6 543.0 C747.2 544.5 749.2 546.6 749.9 547.3 C750.6 546.8 752.6 544.5 754.2 544.1 C755.8 543.7 758.0 543.5 759.6 544.6 C761.2 545.8 763.1 549.9 763.8 551.0 C765.0 550.6 769.1 549.2 771.3 548.8 C773.5 548.4 776.0 548.5 777.0 548.5 L779.0 556.0 L771.3 561.2 C771.8 561.7 773.8 562.7 774.5 563.9 C775.2 565.1 776.0 566.5 775.6 568.2 C775.2 569.9 774.2 572.5 772.4 574.0 C770.6 575.5 767.9 576.1 764.9 577.3 C761.9 578.5 759.0 579.9 754.2 581.0 C749.4 582.1 740.9 582.6 736.0 584.2 C731.1 585.8 728.6 588.1 725.0 590.5 C721.4 592.9 716.3 597.3 714.6 598.7 L694.0 608.0 L694.0 586.0 L706.0 585.8 L723.2 575.6 L726.4 550.5 L701.2 553.2 L694.0 553.6 L694.0 541.5 Z" fill="#82b04b"/>
<path d="M700.2 540.9 C703.5 540.7 714.6 540.5 720.0 539.8 C725.4 539.1 729.4 536.9 732.8 536.6 C736.2 536.3 738.2 537.1 740.3 538.2 C742.4 539.3 744.0 541.5 745.6 543.0 C747.2 544.5 749.2 546.6 749.9 547.3 C750.6 546.8 752.6 544.5 754.2 544.1 C755.8 543.7 758.0 543.5 759.6 544.6 C761.2 545.8 763.1 549.9 763.8 551.0 C765.0 550.5 769.3 549.0 771.3 548.3 C773.3 547.6 775.2 547.0 776.0 546.8" fill="none" stroke="#557f2c" stroke-width="1" stroke-linejoin="round" stroke-linecap="round"/>
<path d="M771.3 561.2  C771.8 561.7 773.8 562.7 774.5 563.9 C775.2 565.1 776.0 566.5 775.6 568.2 C775.2 569.9 774.2 572.5 772.4 574.0 C770.6 575.5 767.9 576.1 764.9 577.3 C761.9 578.5 759.0 579.9 754.2 581.0 C749.4 582.1 740.9 582.6 736.0 584.2 C731.1 585.8 728.6 588.1 725.0 590.5 C721.4 592.9 716.3 597.3 714.6 598.7" fill="none" stroke="#557f2c" stroke-width="1" stroke-linejoin="round" stroke-linecap="round"/>
<path d="M700.4 581.5 L706.0 585.8 L723.2 575.6 L726.4 550.5 L701.2 553.2" fill="none" stroke="#557f2c" stroke-width="1" stroke-linejoin="round" stroke-linecap="round"/>
<path d="M693 538 H699.5 V610 H693 Z" fill="#82b04b"/>
<path d="M903.5 598 L918.3 583.2 L921 574 H932 V606 H901 Z" fill="#82b04b"/>
<path d="M818.7 463 V495 M800 473.5 H839" stroke="#8cbc55" stroke-width=".8" fill="none"/>
<rect x="509.1" y="190.6" width="618.3" height="566.8" fill="none" stroke="#a4a4a4" stroke-width="1.6"/>
<rect x="504.8" y="186.4" width="8" height="8" fill="#fff" stroke="#999" stroke-width="1.2"/>
<rect x="1123.4" y="186.4" width="8" height="8" fill="#fff" stroke="#999" stroke-width="1.2"/>
<rect x="504.8" y="753.4" width="8" height="8" fill="#fff" stroke="#999" stroke-width="1.2"/>
<rect x="1123.4" y="753.4" width="8" height="8" fill="#fff" stroke="#999" stroke-width="1.2"/>
<rect x="777" y="161" width="83" height="17" rx="2" fill="#1f1f1f"/>
<text x="786" y="174" font-family="Liberation Sans" font-size="10.5" fill="#fff" font-weight="bold" textLength="64.5" lengthAdjust="spacingAndGlyphs" xml:space="preserve">7.31  in x 6.7  in</text>
<path d="M1004.5 496 L1004.5 520.5 L1010 515.5 L1014 524 L1018 522.2 L1014.3 514 L1021.5 514 Z" fill="#000" stroke="#fff" stroke-width="1.3" stroke-linejoin="round"/>
<!--/ART-->
</svg>

<!-- PANEL -->
<div id="panel">
<!--PANEL-ITEMS-->
<div class="abs" style="left:13px;top:11px;font-size:10.6px;font-weight:bold;color:#0b8a63;letter-spacing:0">Layers</div>
<div class="abs" style="left:71px;top:11px;font-size:11.5px;color:#555;letter-spacing:.05px">Color Sync</div>
<div class="abs" style="left:0;top:36px;width:234px;height:1px;background:#e6e6e6"></div>
<div class="abs" style="left:1px;top:34px;width:59px;height:2px;background:#0b8a63"></div>
<svg class="abs" style="left:14.0px;top:47.0px" width="16" height="16" viewBox="0 0 16 16"><path d="M1 4.5 V2.5 Q1 1 2.5 1 H4.5 M11.5 1 H13.5 Q15 1 15 2.5 V4.5 M15 11.5 V13.5 Q15 15 13.5 15 H11.5 M4.5 15 H2.5 Q1 15 1 13.5 V11.5" fill="none" stroke="#dcdcdc" stroke-width="1.2" stroke-linecap="round" stroke-linejoin="round"/><rect x="4.2" y="4.2" width="5" height="5" rx="1" fill="none" stroke="#dcdcdc" stroke-width="1.2" stroke-linecap="round" stroke-linejoin="round"/><rect x="6.8" y="6.8" width="5" height="5" rx="1" fill="none" stroke="#dcdcdc" stroke-width="1.2" stroke-linecap="round" stroke-linejoin="round"/></svg>
<svg class="abs" style="left:45.0px;top:47.0px" width="16" height="16" viewBox="0 0 16 16"><path d="M11 3.8 V2.4 Q11 1.2 9.8 1.2 H2.4 Q1.2 1.2 1.2 2.4 V9.8 Q1.2 11 2.4 11 H3.8" fill="none" stroke="#2b2b2b" stroke-width="1.2" stroke-linecap="round" stroke-linejoin="round"/><rect x="4.4" y="4.4" width="10.2" height="10.2" rx="1.3" fill="none" stroke="#2b2b2b" stroke-width="1.2" stroke-linecap="round" stroke-linejoin="round"/><path d="M9.5 6.8 V12.2 M6.8 9.5 H12.2" fill="none" stroke="#2b2b2b" stroke-width="1.2" stroke-linecap="round" stroke-linejoin="round"/></svg>
<svg class="abs" style="left:76.5px;top:47.0px" width="16" height="16" viewBox="0 0 16 16"><path d="M1.5 4 H14.5 M5.5 3.8 V2.4 Q5.5 1.4 6.5 1.4 H9.5 Q10.5 1.4 10.5 2.4 V3.8 M3 4.2 L3.8 13.4 Q3.9 14.6 5.1 14.6 H10.9 Q12.1 14.6 12.2 13.4 L13 4.2 M6.4 7 V11.8 M9.6 7 V11.8" fill="none" stroke="#2b2b2b" stroke-width="1.2" stroke-linecap="round" stroke-linejoin="round"/></svg>
<div class="abs" style="left:0;top:74px;width:222px;height:1px;background:#ececec"></div>
<div class="abs" style="left:221px;top:75px;width:12px;height:607px;background:#f3f3f3"></div>
<div class="abs" style="left:224.5px;top:81.0px;border:3px solid transparent;border-top:none;border-bottom:3.5px solid #777"></div>
<div class="abs" style="left:224.5px;top:674.0px;border:3px solid transparent;border-bottom:none;border-top:3.5px solid #777"></div>
<div class="abs" style="left:3px;top:78px;width:215.5px;height:43.5px;background:#b7ecdd;border-radius:3px"></div>
<div class="ln" style="top:84.8px;color:#222;">Weld Result</div>
<div class="ls" style="top:100.2px">Basic Cut</div>
<div class="ln" style="top:130.2px;">Weld Result</div>
<div class="ls" style="top:145.7px">Basic Cut</div>
<div class="ln" style="top:175.7px;">Weld Result</div>
<div class="ls" style="top:191.2px">Basic Cut</div>
<div class="ln" style="top:312.3px;"><span style="letter-spacing:.27px">svg-snowman-family-cr...</span></div>
<div class="ls" style="top:327.8px">Basic Cut</div>
<div class="ln" style="top:357.8px;"><span style="letter-spacing:.27px">svg-snowman-family-cr...</span></div>
<div class="ls" style="top:373.2px">Basic Cut</div>
<div class="ln" style="top:403.2px;"><span style="letter-spacing:.27px">svg-snowman-family-cr...</span></div>
<div class="ls" style="top:418.7px">Basic Cut</div>
<svg class="abs" style="left:28.0px;top:90.0px" width="20" height="20" viewBox="0 0 20 20"><path d="M10 1.5 L11 3.5 L13 3.8 L11.5 5.2 L12 7 L14.5 11.5 L12.5 11.5 L15 16 H5 L7.5 11.5 L5.5 11.5 L8 7 L8.5 5.2 L7 3.8 L9 3.5 Z" fill="#9ccb60" stroke="#222" stroke-width=".7"/><circle cx="5.3" cy="13.7" r="3.1" fill="#82b04b" stroke="#3c5a1e" stroke-width=".5"/><circle cx="5.3" cy="9.7" r="2.2" fill="#82b04b" stroke="#3c5a1e" stroke-width=".5"/><rect x="4.1" y="5.9" width="2.4" height="2.4" fill="#82b04b"/><path d="M2.7 12.1 h-2 M7.9 12.1 h2" stroke="#82b04b" stroke-width=".9"/><circle cx="14.7" cy="13.7" r="3.1" fill="#82b04b" stroke="#3c5a1e" stroke-width=".5"/><circle cx="14.7" cy="9.7" r="2.2" fill="#82b04b" stroke="#3c5a1e" stroke-width=".5"/><rect x="13.5" y="5.9" width="2.4" height="2.4" fill="#82b04b"/><path d="M12.1 12.1 h-2 M17.3 12.1 h2" stroke="#82b04b" stroke-width=".9"/></svg>
<svg class="abs" style="left:28.0px;top:135.0px" width="20" height="20" viewBox="0 0 20 20"><circle cx="5.3" cy="11.7" r="3.1" fill="#8cc152" stroke="#4f7a2a" stroke-width=".5"/><circle cx="5.3" cy="7.7" r="2.2" fill="#8cc152" stroke="#4f7a2a" stroke-width=".5"/><rect x="4.1" y="3.9" width="2.4" height="2.4" fill="#8cc152"/><path d="M2.7 10.1 h-2 M7.9 10.1 h2" stroke="#8cc152" stroke-width=".9"/><circle cx="14.2" cy="11.7" r="3.1" fill="#8cc152" stroke="#4f7a2a" stroke-width=".5"/><circle cx="14.2" cy="7.7" r="2.2" fill="#8cc152" stroke="#4f7a2a" stroke-width=".5"/><rect x="13" y="3.9" width="2.4" height="2.4" fill="#8cc152"/><path d="M11.6 10.1 h-2 M16.8 10.1 h2" stroke="#8cc152" stroke-width=".9"/></svg>
<svg class="abs" style="left:28.0px;top:180.5px" width="20" height="20" viewBox="0 0 20 20"><circle cx="5.3" cy="11.7" r="3.1" fill="#2a1a08" stroke="#000" stroke-width=".5"/><circle cx="5.3" cy="7.7" r="2.2" fill="#2a1a08" stroke="#000" stroke-width=".5"/><rect x="4.1" y="3.9" width="2.4" height="2.4" fill="#2a1a08"/><path d="M2.7 10.1 h-2 M7.9 10.1 h2" stroke="#2a1a08" stroke-width=".9"/><circle cx="14.2" cy="11.7" r="3.1" fill="#2a1a08" stroke="#000" stroke-width=".5"/><circle cx="14.2" cy="7.7" r="2.2" fill="#2a1a08" stroke="#000" stroke-width=".5"/><rect x="13" y="3.9" width="2.4" height="2.4" fill="#2a1a08"/><path d="M11.6 10.1 h-2 M16.8 10.1 h2" stroke="#2a1a08" stroke-width=".9"/></svg>
<svg class="abs" style="left:28.0px;top:317.0px" width="19" height="19" viewBox="0 0 19 19"><path d="M9.5 1.2 L12 6.6 L17.8 7.2 L13.5 11.2 L14.7 17 L9.5 14.1 L4.3 17 L5.5 11.2 L1.2 7.2 L7 6.6 Z" fill="#f7d038" stroke="#b8972a" stroke-width=".6"/></svg>
<svg class="abs" style="left:28.0px;top:362.0px" width="19" height="19" viewBox="0 0 19 19"><path d="M9.5 1.6 L10.4 3.4 Q13.5 9 16.6 14.4 Q13 16.4 11 15.4 Q9.5 16.8 8 15.4 Q6 16.4 2.4 14.4 Q5.5 9 8.6 3.4 Z" fill="#8cc152" stroke="#5a8a30" stroke-width=".6"/></svg>
<svg class="abs" style="left:28.0px;top:407.5px" width="19" height="19" viewBox="0 0 19 19"><path d="M9.5 1.6 L10.6 3.6 Q12 9 16 13.6 Q13 15.4 10.8 14.6 L11 18 H8 L8.2 14.6 Q6 15.4 3 13.6 Q7 9 8.4 3.6 Z" fill="#2e1c08" stroke="#000" stroke-width=".5"/></svg>
<svg class="abs" style="left:12.0px;top:231.2px" width="7" height="9" viewBox="0 0 7 9"><path d="M1.5 1 L5.2 4.5 L1.5 8" fill="none" stroke="#777" stroke-width="1.1" stroke-linecap="round" stroke-linejoin="round"/></svg>
<svg class="abs" style="left:29.0px;top:227.7px" width="16" height="16" viewBox="0 0 16 16"><path d="M1 4.5 V2.5 Q1 1 2.5 1 H4.5 M11.5 1 H13.5 Q15 1 15 2.5 V4.5 M15 11.5 V13.5 Q15 15 13.5 15 H11.5 M4.5 15 H2.5 Q1 15 1 13.5 V11.5" fill="none" stroke="#b5b5b5" stroke-width="1.2" stroke-linecap="round" stroke-linejoin="round"/><rect x="4.2" y="4.2" width="5" height="5" rx="1" fill="none" stroke="#b5b5b5" stroke-width="1.2" stroke-linecap="round" stroke-linejoin="round"/><rect x="6.8" y="6.8" width="5" height="5" rx="1" fill="none" stroke="#b5b5b5" stroke-width="1.2" stroke-linecap="round" stroke-linejoin="round"/></svg>
<div class="ln" style="top:229.7px;color:#b0b0b0">Group</div>
<svg class="abs" style="left:174.0px;top:229.7px" width="13" height="12" viewBox="0 0 13 12"><path d="M1 6 Q6.5 .5 12 6 Q6.5 11.5 1 6 Z" fill="none" stroke="#777" stroke-width=".9" stroke-linejoin="round"/><circle cx="6.5" cy="6" r="1.6" fill="none" stroke="#777" stroke-width=".9"/><path d="M2 1.2 L11 10.8" stroke="#777" stroke-width="1"/></svg>
<svg class="abs" style="left:12.0px;top:275.6px" width="7" height="9" viewBox="0 0 7 9"><path d="M1.5 1 L5.2 4.5 L1.5 8" fill="none" stroke="#777" stroke-width="1.1" stroke-linecap="round" stroke-linejoin="round"/></svg>
<svg class="abs" style="left:29.0px;top:272.1px" width="16" height="16" viewBox="0 0 16 16"><path d="M1 4.5 V2.5 Q1 1 2.5 1 H4.5 M11.5 1 H13.5 Q15 1 15 2.5 V4.5 M15 11.5 V13.5 Q15 15 13.5 15 H11.5 M4.5 15 H2.5 Q1 15 1 13.5 V11.5" fill="none" stroke="#b5b5b5" stroke-width="1.2" stroke-linecap="round" stroke-linejoin="round"/><rect x="4.2" y="4.2" width="5" height="5" rx="1" fill="none" stroke="#b5b5b5" stroke-width="1.2" stroke-linecap="round" stroke-linejoin="round"/><rect x="6.8" y="6.8" width="5" height="5" rx="1" fill="none" stroke="#b5b5b5" stroke-width="1.2" stroke-linecap="round" stroke-linejoin="round"/></svg>
<div class="ln" style="top:274.1px;color:#b0b0b0">Group</div>
<svg class="abs" style="left:174.0px;top:274.1px" width="13" height="12" viewBox="0 0 13 12"><path d="M1 6 Q6.5 .5 12 6 Q6.5 11.5 1 6 Z" fill="none" stroke="#777" stroke-width=".9" stroke-linejoin="round"/><circle cx="6.5" cy="6" r="1.6" fill="none" stroke="#777" stroke-width=".9"/><path d="M2 1.2 L11 10.8" stroke="#777" stroke-width="1"/></svg>
<div class="abs" style="left:0;top:682px;width:234px;height:39px;background:#f4f4f4"></div>
<div class="abs" style="left:7.0px;top:687px;width:42px;height:28px;background:#fff;border:1px solid #a9a9a9"></div>
<div class="abs" style="left:57px;top:698px;font-size:7.5px;color:#333;letter-spacing:.1px">Blank Canvas</div>
<svg class="abs" style="left:19.0px;top:725.0px" width="16" height="16" viewBox="0 0 16 16"><circle cx="6.5" cy="6.5" r="5.2" fill="none" stroke="#c9c9c9" stroke-width="1.1" stroke-linecap="round" stroke-linejoin="round"/><path d="M6.5 9 V14.5 H14.5 V6.5 H11.8" fill="none" stroke="#c9c9c9" stroke-width="1.1" stroke-linecap="round" stroke-linejoin="round"/><path d="M6.5 9 Q6.5 6.5 9 6.5 Q11.5 6.5 11.5 9 Q11.5 11.5 9 11.5" fill="none" stroke="#c9c9c9" stroke-width="1.1" stroke-linecap="round" stroke-linejoin="round"/></svg>
<svg class="abs" style="left:61.0px;top:725.0px" width="16" height="16" viewBox="0 0 16 16"><rect x="1" y="1" width="8.5" height="8.5" rx="1" fill="none" stroke="#c9c9c9" stroke-width="1.1" stroke-linecap="round" stroke-linejoin="round"/><circle cx="9.8" cy="9.8" r="5" fill="none" stroke="#c9c9c9" stroke-width="1.1" stroke-linecap="round" stroke-linejoin="round"/></svg>
<div class="car" style="left:80.5px;top:732.5px;border-top-color:#c4c4c4"></div>
<svg class="abs" style="left:109.0px;top:727.0px" width="17" height="12" viewBox="0 0 17 12"><path d="M4.5 9.2 H11.5 Q15 9.2 15 6 Q15 2.8 11.5 2.8 H5 Q2 2.8 2 5.6 Q2 8 4.8 8 H10.8 Q12.4 8 12.4 6.6 Q12.4 5.4 10.8 5.4 H5.5" fill="none" stroke="#c9c9c9" stroke-width="1.1" stroke-linecap="round" stroke-linejoin="round"/></svg>
<svg class="abs" style="left:154.0px;top:724.0px" width="16" height="17" viewBox="0 0 16 17"><path d="M8 1 V6.5 M5.6 4.4 L8 6.8 L10.4 4.4 M1.5 8 L8 12 L14.5 8 M1.5 11.5 L8 15.5 L14.5 11.5" fill="none" stroke="#c9c9c9" stroke-width="1.1" stroke-linecap="round" stroke-linejoin="round"/></svg>
<svg class="abs" style="left:199.0px;top:724.5px" width="17" height="17" viewBox="0 0 17 17"><circle cx="8.5" cy="8.5" r="6.8" fill="none" stroke="#2b2b2b" stroke-width="1.3" stroke-dasharray="2.6 2.15"/></svg>
<div class="bl" style="left:1.7px;color:#d0d0d0">Slice</div>
<div class="bl" style="left:47.7px;color:#d0d0d0">Combine</div>
<div class="bl" style="left:92.2px;color:#d0d0d0">Attach</div>
<div class="bl" style="left:137.0px;color:#d0d0d0">Flatten</div>
<div class="bl" style="left:182.5px;color:#444">Contour</div>
<!--/PANEL-ITEMS-->
</div>

<!-- WATERMARK -->
<!--WATERMARK-->
<div class="abs" style="left:100px;top:797px;width:72px;height:27px;border-radius:13px;background:rgba(238,238,238,.92)"></div>
<div class="abs" style="left:111px;top:801px;font-size:17px;color:#bdbdbd;letter-spacing:-.3px">50%</div>
<svg class="abs" style="left:150px;top:803px" width="17" height="17" viewBox="0 0 17 17"><circle cx="8.5" cy="8.5" r="6.8" fill="none" stroke="#c4c4c4" stroke-width="1.4"/><path d="M8.5 5 V12 M5 8.5 H12" stroke="#c4c4c4" stroke-width="1.4"/></svg>
<svg class="abs" style="left:8px;top:742px" width="114" height="92" viewBox="8 742 114 92">
<ellipse cx="64.9" cy="787.7" rx="52.2" ry="41.4" fill="#c93a1f"/>
<g fill="#fff" stroke="#fff" stroke-width=".35" font-family="Liberation Serif" font-style="italic">
<text x="26.5" y="784.8" font-size="33" textLength="19" lengthAdjust="spacingAndGlyphs">C</text>
<text x="44.5" y="784.8" font-size="25" textLength="36" lengthAdjust="spacingAndGlyphs">raft</text>
<text x="40" y="811.8" font-size="34" textLength="14" lengthAdjust="spacingAndGlyphs">S</text>
<text x="53" y="811.8" font-size="25" textLength="44" lengthAdjust="spacingAndGlyphs">arah</text>
</g>
<text x="86.4" y="780" font-family="Liberation Serif" font-weight="bold" font-size="7" fill="#fff" textLength="21" lengthAdjust="spacingAndGlyphs">WITH</text>
<g fill="none" stroke="#fff" stroke-linecap="round">
<path d="M87.5 784 Q91.5 781.6 96 783.6 Q102.5 786.8 108.4 781.8" stroke-width="1.3"/>
<path d="M31 766 Q25.5 765.5 25.6 769.5 Q26.5 773 30 771" stroke-width="1"/>
<path d="M69.5 785 Q68.5 792.5 65.5 793.3 Q63.3 792.6 64.4 790.4" stroke-width="1.1"/>
<path d="M42 800 Q33 800 32.5 807.5 Q33.5 814.5 41 813 Q45 811 43.5 807" stroke-width="1"/>
<path d="M38 810 Q36.5 806 40 805" stroke-width=".8"/>
<path d="M92 800 Q96 789 102.5 789.5 Q105 792 101 796" stroke-width="1"/>
<path d="M76 792.5 Q72 790 70.5 793.5 Q71 797 74.5 795.5" stroke-width=".9"/>
<path d="M74 765 Q78 761.5 80 765.5" stroke-width="1"/>
</g>
</svg>
<!--/WATERMARK-->
</body>
</html>
